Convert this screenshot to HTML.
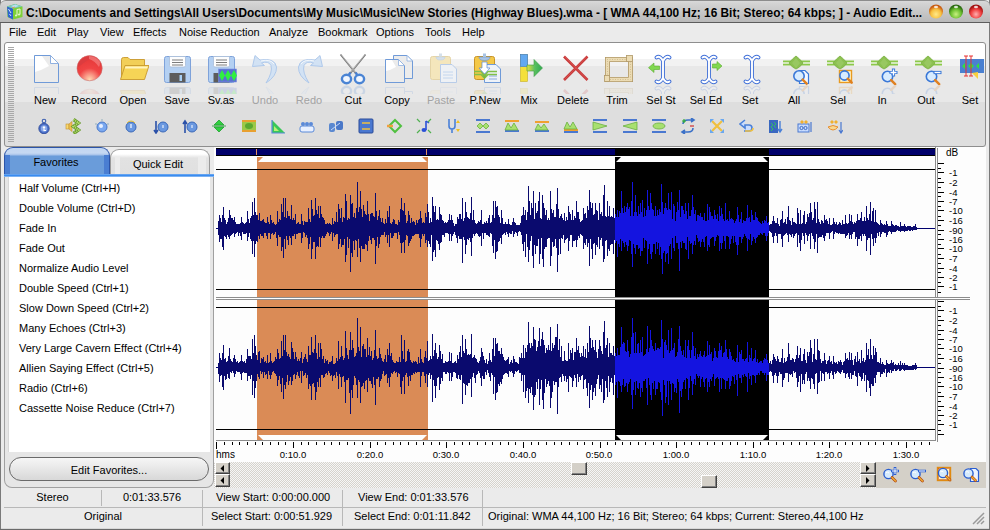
<!DOCTYPE html>
<html><head><meta charset="utf-8">
<style>
*{margin:0;padding:0;box-sizing:border-box}
html,body{width:990px;height:530px;overflow:hidden;background:#ebebeb;font-family:"Liberation Sans",sans-serif;font-size:11px;color:#000}
.a{position:absolute}
.t{position:absolute;white-space:nowrap;line-height:13px}
#title{left:0;top:0;width:990px;height:23px;background:linear-gradient(#d9d9d9 0,#d2d2d2 3px,#c6c6c6 12px,#b9b9b9 21px);border-top:1px solid #8c8c8c;border-bottom:1px solid #5c5c5c;border-radius:6px 6px 0 0}
#ttext{left:26px;top:6px;font-weight:bold;font-size:11.85px;line-height:14px}
.menu{top:26px}
#tb{left:4px;top:42px;width:982px;height:105px;border:1px solid #8e8e8e;border-radius:3px;background:linear-gradient(#fff 0,#fff 16px,#f2f2f2 16px,#f2f2f2 23px,#e8e8e8 23px,#e8e8e8 59px,#dedede 59px)}
.grip{left:8px;width:6px;height:1px;background:#a8a8a8}
.lbl{top:94px;width:60px;text-align:center}
.dis{color:#a3a3a3}
#lp{left:4px;top:147px;width:210px;height:341px}
.fav{left:19px}
#wf{left:214px;top:147px;width:772px;height:315px;background:#fdfdfd}
.stat{top:490px}
</style></head><body>
<div class="a" style="left:0;top:0;width:1px;height:530px;background:#7a7a7a"></div>
<div class="a" style="left:989px;top:0;width:1px;height:530px;background:#7a7a7a"></div>
<div class="a" style="left:0;top:529px;width:990px;height:1px;background:#6a6a6a"></div>
<div class="a" style="left:1px;top:528px;width:988px;height:1px;background:#d8d8d8"></div>

<!-- TITLE -->
<div id="title" class="a"></div>
<svg class="a" style="left:0;top:0" width="26" height="22" viewBox="0 0 26 22">
<path d="M7 6.5L15 4L22.5 6.5V17L13 19.5L7.5 17Z" fill="#7ed038"/>
<path d="M7 6.5L13 8.5V19.5L8 17Z" fill="#2f64d0"/>
<path d="M7 6.5L15 4L22.5 6.5L13 8.5Z" fill="#78c8c0"/>
<path d="M11 6L15.5 4.5L19 6L14 7.5Z" fill="#b8e0f0"/>
<path d="M17 9.5V15.5M17 9.5L20 9V14.5" stroke="#e8f8d0" stroke-width="1" fill="none"/>
<circle cx="16" cy="15.5" r="1" fill="#e8f8d0"/><circle cx="19" cy="14.5" r="1" fill="#e8f8d0"/>
<path d="M8.5 9L11 13M9.5 14L11 16" stroke="#d0e4ff" stroke-width="1"/>
<path d="M12 8L15 7" stroke="#e89040" stroke-width=".8"/>
</svg>
<div id="ttext" class="t">C:\Documents and Settings\All Users\Documents\My Music\Music\New Stories (Highway Blues).wma - [ WMA 44,100 Hz; 16 Bit; Stereo; 64 kbps; ] - Audio Edit...</div>
<svg class="a" style="left:927px;top:3px" width="60" height="17" viewBox="0 0 60 17">
<defs>
<radialGradient id="go" cx="0.5" cy="0.7" r="0.6"><stop offset="0" stop-color="#ffe98a"/><stop offset="0.6" stop-color="#f7c040"/><stop offset="1" stop-color="#c85a10"/></radialGradient>
<radialGradient id="gg" cx="0.5" cy="0.7" r="0.6"><stop offset="0" stop-color="#c8f080"/><stop offset="0.6" stop-color="#6cc030"/><stop offset="1" stop-color="#2a6a10"/></radialGradient>
<radialGradient id="gr" cx="0.5" cy="0.7" r="0.6"><stop offset="0" stop-color="#ffb0b0"/><stop offset="0.6" stop-color="#f04040"/><stop offset="1" stop-color="#a01010"/></radialGradient>
</defs>
<circle cx="9" cy="8.5" r="7" fill="url(#go)"/><ellipse cx="9" cy="4" rx="2" ry="1.2" fill="#fff" opacity=".8"/>
<circle cx="29" cy="8.5" r="7" fill="url(#gg)"/><ellipse cx="29" cy="4" rx="2" ry="1.2" fill="#fff" opacity=".8"/>
<circle cx="49" cy="8.5" r="7" fill="url(#gr)"/><ellipse cx="49" cy="4" rx="2" ry="1.2" fill="#fff" opacity=".8"/>
</svg>

<!-- MENU -->
<div class="t menu" style="left:9px">File</div>
<div class="t menu" style="left:37px">Edit</div>
<div class="t menu" style="left:67px">Play</div>
<div class="t menu" style="left:100px">View</div>
<div class="t menu" style="left:133px">Effects</div>
<div class="t menu" style="left:179px">Noise Reduction</div>
<div class="t menu" style="left:269px">Analyze</div>
<div class="t menu" style="left:318px">Bookmark</div>
<div class="t menu" style="left:376px">Options</div>
<div class="t menu" style="left:425px">Tools</div>
<div class="t menu" style="left:462px">Help</div>

<!-- TOOLBAR -->
<div id="tb" class="a"></div>
<div class="a grip" style="top:47px"></div><div class="a grip" style="top:49px"></div><div class="a grip" style="top:51px"></div><div class="a grip" style="top:53px"></div><div class="a grip" style="top:55px"></div><div class="a grip" style="top:57px"></div><div class="a grip" style="top:59px"></div><div class="a grip" style="top:61px"></div><div class="a grip" style="top:63px"></div><div class="a grip" style="top:65px"></div><div class="a grip" style="top:67px"></div><div class="a grip" style="top:69px"></div><div class="a grip" style="top:71px"></div><div class="a grip" style="top:73px"></div><div class="a grip" style="top:75px"></div><div class="a grip" style="top:77px"></div><div class="a grip" style="top:79px"></div><div class="a grip" style="top:81px"></div><div class="a grip" style="top:83px"></div><div class="a grip" style="top:85px"></div><div class="a grip" style="top:87px"></div><div class="a grip" style="top:89px"></div><div class="a grip" style="top:91px"></div><div class="a grip" style="top:93px"></div><div class="a grip" style="top:95px"></div><div class="a grip" style="top:97px"></div><div class="a grip" style="top:99px"></div><div class="a grip" style="top:101px"></div><div class="a grip" style="top:103px"></div><div class="a grip" style="top:105px"></div><div class="a grip" style="top:107px"></div><div class="a grip" style="top:109px"></div><div class="a grip" style="top:111px"></div><div class="a grip" style="top:113px"></div><div class="a grip" style="top:115px"></div><div class="a grip" style="top:117px"></div><div class="a grip" style="top:119px"></div><div class="a grip" style="top:121px"></div><div class="a grip" style="top:123px"></div><div class="a grip" style="top:125px"></div><div class="a grip" style="top:127px"></div><div class="a grip" style="top:129px"></div><div class="a grip" style="top:131px"></div><div class="a grip" style="top:133px"></div><div class="a grip" style="top:135px"></div><div class="a grip" style="top:137px"></div><div class="a grip" style="top:139px"></div><div class="a grip" style="top:141px"></div>
<svg class="a" style="left:29px;top:53px" width="32" height="32" viewBox="0 0 32 32"><path d="M5.5 2.5H21.5L29.5 10.5V29.5H5.5Z" fill="#ebebeb" stroke="#6f9ad8"/><path d="M6 3H13L20 13L12 17L6 19Z" fill="#fff"/><path d="M21.5 2.5V10.5H29.5Z" fill="#fff" stroke="#8fb0e0"/></svg><svg class="a" style="left:29px;top:85px;opacity:.18" width="32" height="9" viewBox="0 23 32 9"><g transform="translate(0 55) scale(1 -1)"><path d="M5.5 2.5H21.5L29.5 10.5V29.5H5.5Z" fill="#ebebeb" stroke="#6f9ad8"/><path d="M6 3H13L20 13L12 17L6 19Z" fill="#fff"/><path d="M21.5 2.5V10.5H29.5Z" fill="#fff" stroke="#8fb0e0"/></g></svg><div class="t lbl" style="left:15px">New</div><svg class="a" style="left:73px;top:53px" width="32" height="32" viewBox="0 0 32 32"><defs><radialGradient id="rg" cx=".5" cy=".95" r=".75"><stop offset="0" stop-color="#ffd8b0"/><stop offset=".3" stop-color="#f89080"/><stop offset=".6" stop-color="#f04444"/><stop offset="1" stop-color="#e83c3c"/></radialGradient></defs>
<circle cx="16.6" cy="15.2" r="12.6" fill="url(#rg)" stroke="#c87070" stroke-width=".6"/><path d="M5 11Q9 4 16 3Q21 3 24 6Q17 5 12 9Q8 12 5 14Z" fill="#d83c40" opacity=".8"/><path d="M16 3Q23 3 27 9Q27 13 26 14Q22 8 16 6Z" fill="#f48080" opacity=".7"/></svg><svg class="a" style="left:73px;top:85px;opacity:.18" width="32" height="9" viewBox="0 23 32 9"><g transform="translate(0 55) scale(1 -1)"><defs><radialGradient id="rrg" cx=".5" cy=".95" r=".75"><stop offset="0" stop-color="#ffd8b0"/><stop offset=".3" stop-color="#f89080"/><stop offset=".6" stop-color="#f04444"/><stop offset="1" stop-color="#e83c3c"/></radialGradient></defs>
<circle cx="16.6" cy="15.2" r="12.6" fill="url(#rrg)" stroke="#c87070" stroke-width=".6"/><path d="M5 11Q9 4 16 3Q21 3 24 6Q17 5 12 9Q8 12 5 14Z" fill="#d83c40" opacity=".8"/><path d="M16 3Q23 3 27 9Q27 13 26 14Q22 8 16 6Z" fill="#f48080" opacity=".7"/></g></svg><div class="t lbl" style="left:59px">Record</div><svg class="a" style="left:117px;top:53px" width="32" height="32" viewBox="0 0 32 32"><path d="M4.5 6.5Q4.5 4.5 6.5 4.5H11L13 6.5H27.5V24.5H4.5Z" fill="#f2cf58" stroke="#c8982c" stroke-width=".9"/><path d="M3.5 26.5L8 12.5H32L27.5 26.5Z" fill="#f6d456" stroke="#c8982c" stroke-width=".9"/><path d="M8.5 13.5H31L30.3 15.5H7.8Z" fill="#fff4c0"/></svg><svg class="a" style="left:117px;top:85px;opacity:.18" width="32" height="9" viewBox="0 23 32 9"><g transform="translate(0 55) scale(1 -1)"><path d="M4.5 6.5Q4.5 4.5 6.5 4.5H11L13 6.5H27.5V24.5H4.5Z" fill="#f2cf58" stroke="#c8982c" stroke-width=".9"/><path d="M3.5 26.5L8 12.5H32L27.5 26.5Z" fill="#f6d456" stroke="#c8982c" stroke-width=".9"/><path d="M8.5 13.5H31L30.3 15.5H7.8Z" fill="#fff4c0"/></g></svg><div class="t lbl" style="left:103px">Open</div><svg class="a" style="left:161px;top:53px" width="32" height="32" viewBox="0 0 32 32"><rect x="3.5" y="3.5" width="26" height="26" rx="2" fill="#b4d0f2" stroke="#7ea2da"/><path d="M8.5 3.5H24.5V12.5Q24.5 14 23 14H10Q8.5 14 8.5 12.5Z" fill="#fdfdfd" stroke="#a8bcd8" stroke-width=".8"/><path d="M11 7H22M11 9.5H22M11 12H22" stroke="#5a5a5a" stroke-width=".8"/><rect x="8.5" y="20" width="16" height="9.5" fill="#5c5c5c"/><rect x="18.5" y="22" width="2.5" height="6" fill="#a8d0f4"/></svg><svg class="a" style="left:161px;top:85px;opacity:.18" width="32" height="9" viewBox="0 23 32 9"><g transform="translate(0 55) scale(1 -1)"><rect x="3.5" y="3.5" width="26" height="26" rx="2" fill="#b4d0f2" stroke="#7ea2da"/><path d="M8.5 3.5H24.5V12.5Q24.5 14 23 14H10Q8.5 14 8.5 12.5Z" fill="#fdfdfd" stroke="#a8bcd8" stroke-width=".8"/><path d="M11 7H22M11 9.5H22M11 12H22" stroke="#5a5a5a" stroke-width=".8"/><rect x="8.5" y="20" width="16" height="9.5" fill="#5c5c5c"/><rect x="18.5" y="22" width="2.5" height="6" fill="#a8d0f4"/></g></svg><div class="t lbl" style="left:147px">Save</div><svg class="a" style="left:205px;top:53px" width="32" height="32" viewBox="0 0 32 32"><rect x="3.5" y="3.5" width="26" height="26" rx="2" fill="#b4d0f2" stroke="#7ea2da"/><path d="M8.5 3.5H24.5V12.5Q24.5 14 23 14H10Q8.5 14 8.5 12.5Z" fill="#fdfdfd" stroke="#a8bcd8" stroke-width=".8"/><path d="M11 7H22M11 9.5H22M11 12H22" stroke="#5a5a5a" stroke-width=".8"/><rect x="8.5" y="20" width="16" height="9.5" fill="#5c5c5c"/><rect x="18.5" y="22" width="2.5" height="6" fill="#a8d0f4"/><rect x="13.5" y="16" width="18" height="13" fill="#5a70d0" stroke="#7a90e0" stroke-width=".6"/><path d="M14 22.5L17 17L20 22.5L17 28ZM20 22.5L23 17L26 22.5L23 28ZM26 22.5L29 17L32 22.5L29 28Z" fill="#30f040"/></svg><svg class="a" style="left:205px;top:85px;opacity:.18" width="32" height="9" viewBox="0 23 32 9"><g transform="translate(0 55) scale(1 -1)"><rect x="3.5" y="3.5" width="26" height="26" rx="2" fill="#b4d0f2" stroke="#7ea2da"/><path d="M8.5 3.5H24.5V12.5Q24.5 14 23 14H10Q8.5 14 8.5 12.5Z" fill="#fdfdfd" stroke="#a8bcd8" stroke-width=".8"/><path d="M11 7H22M11 9.5H22M11 12H22" stroke="#5a5a5a" stroke-width=".8"/><rect x="8.5" y="20" width="16" height="9.5" fill="#5c5c5c"/><rect x="18.5" y="22" width="2.5" height="6" fill="#a8d0f4"/><rect x="13.5" y="16" width="18" height="13" fill="#5a70d0" stroke="#7a90e0" stroke-width=".6"/><path d="M14 22.5L17 17L20 22.5L17 28ZM20 22.5L23 17L26 22.5L23 28ZM26 22.5L29 17L32 22.5L29 28Z" fill="#30f040"/></g></svg><div class="t lbl" style="left:191px">Sv.as</div><svg class="a" style="left:249px;top:53px" width="32" height="32" viewBox="0 0 32 32"><path d="M6 2.5L3.5 13.5L15.5 12.5L12.5 10Q19.5 7.5 22 12.5Q24 19 17 30Q28 23 27.5 14Q26 4.5 11 7Z" fill="#d2e2f4" stroke="#a9c5ea" stroke-width=".9"/><path d="M12 8Q21 5.5 25 11" stroke="#f4f8fc" stroke-width="1" fill="none"/></svg><svg class="a" style="left:249px;top:85px;opacity:.18" width="32" height="9" viewBox="0 23 32 9"><g transform="translate(0 55) scale(1 -1)"><path d="M6 2.5L3.5 13.5L15.5 12.5L12.5 10Q19.5 7.5 22 12.5Q24 19 17 30Q28 23 27.5 14Q26 4.5 11 7Z" fill="#d2e2f4" stroke="#a9c5ea" stroke-width=".9"/><path d="M12 8Q21 5.5 25 11" stroke="#f4f8fc" stroke-width="1" fill="none"/></g></svg><div class="t lbl dis" style="left:235px">Undo</div><svg class="a" style="left:293px;top:53px" width="32" height="32" viewBox="0 0 32 32"><g transform="translate(33 0) scale(-1 1)"><path d="M6 2.5L3.5 13.5L15.5 12.5L12.5 10Q19.5 7.5 22 12.5Q24 19 17 30Q28 23 27.5 14Q26 4.5 11 7Z" fill="#d2e2f4" stroke="#a9c5ea" stroke-width=".9"/><path d="M12 8Q21 5.5 25 11" stroke="#f4f8fc" stroke-width="1" fill="none"/></g></svg><svg class="a" style="left:293px;top:85px;opacity:.18" width="32" height="9" viewBox="0 23 32 9"><g transform="translate(0 55) scale(1 -1)"><g transform="translate(33 0) scale(-1 1)"><path d="M6 2.5L3.5 13.5L15.5 12.5L12.5 10Q19.5 7.5 22 12.5Q24 19 17 30Q28 23 27.5 14Q26 4.5 11 7Z" fill="#d2e2f4" stroke="#a9c5ea" stroke-width=".9"/><path d="M12 8Q21 5.5 25 11" stroke="#f4f8fc" stroke-width="1" fill="none"/></g></g></svg><div class="t lbl dis" style="left:279px">Redo</div><svg class="a" style="left:337px;top:53px" width="32" height="32" viewBox="0 0 32 32"><path d="M3.5 1.5L18.5 20M28.5 1.5L13.5 20" stroke="#7a7a7a" stroke-width="1.6"/><path d="M4.5 2L18 19M27.5 2L14 19" stroke="#e0e0e0" stroke-width=".5"/><path d="M13.5 19.5L11 23M18.5 19.5L21 23" stroke="#4a80d0" stroke-width="2.4"/><ellipse cx="9.5" cy="26" rx="4.6" ry="4.2" fill="#f0f6ff" stroke="#4a84d4" stroke-width="2.4"/><ellipse cx="22.5" cy="26" rx="4.6" ry="4.2" fill="#f0f6ff" stroke="#4a84d4" stroke-width="2.4"/></svg><svg class="a" style="left:337px;top:85px;opacity:.18" width="32" height="9" viewBox="0 23 32 9"><g transform="translate(0 55) scale(1 -1)"><path d="M3.5 1.5L18.5 20M28.5 1.5L13.5 20" stroke="#7a7a7a" stroke-width="1.6"/><path d="M4.5 2L18 19M27.5 2L14 19" stroke="#e0e0e0" stroke-width=".5"/><path d="M13.5 19.5L11 23M18.5 19.5L21 23" stroke="#4a80d0" stroke-width="2.4"/><ellipse cx="9.5" cy="26" rx="4.6" ry="4.2" fill="#f0f6ff" stroke="#4a84d4" stroke-width="2.4"/><ellipse cx="22.5" cy="26" rx="4.6" ry="4.2" fill="#f0f6ff" stroke="#4a84d4" stroke-width="2.4"/></g></svg><div class="t lbl" style="left:323px">Cut</div><svg class="a" style="left:381px;top:53px" width="32" height="32" viewBox="0 0 32 32"><path d="M12.5 2.5H26L31.5 8V25.5H12.5Z" fill="#ececec" stroke="#6f9ad8"/><path d="M26 2.5V8H31.5Z" fill="#fff" stroke="#8fb0e0" stroke-width=".8"/><path d="M4.5 6.5H17.5L23.5 12.5V29.5H4.5Z" fill="#ebebeb" stroke="#6f9ad8"/><path d="M5 7H11L15 14L9 17L5 18Z" fill="#fff"/><path d="M17.5 6.5V12.5H23.5Z" fill="#fff" stroke="#8fb0e0" stroke-width=".8"/></svg><svg class="a" style="left:381px;top:85px;opacity:.18" width="32" height="9" viewBox="0 23 32 9"><g transform="translate(0 55) scale(1 -1)"><path d="M12.5 2.5H26L31.5 8V25.5H12.5Z" fill="#ececec" stroke="#6f9ad8"/><path d="M26 2.5V8H31.5Z" fill="#fff" stroke="#8fb0e0" stroke-width=".8"/><path d="M4.5 6.5H17.5L23.5 12.5V29.5H4.5Z" fill="#ebebeb" stroke="#6f9ad8"/><path d="M5 7H11L15 14L9 17L5 18Z" fill="#fff"/><path d="M17.5 6.5V12.5H23.5Z" fill="#fff" stroke="#8fb0e0" stroke-width=".8"/></g></svg><div class="t lbl" style="left:367px">Copy</div><svg class="a" style="left:425px;top:53px" width="32" height="32" viewBox="0 0 32 32"><rect x="5.5" y="3.5" width="20" height="23" rx="2" fill="#f4e6bc" stroke="#e4d4a8"/><path d="M11 4H20Q20 7 15.5 7Q11 7 11 4Z" fill="#d4e0ec" stroke="#c0d0e4" stroke-width=".6"/><rect x="14" y="0.5" width="3" height="3" fill="#d4e0ec"/><path d="M15.5 11.5H27L31.5 16V29.5H15.5Z" fill="#eef1f5" stroke="#b8cce8"/><path d="M18 19H28M18 22H28M18 25H28" stroke="#b8d0ec" stroke-width=".8"/></svg><svg class="a" style="left:425px;top:85px;opacity:.18" width="32" height="9" viewBox="0 23 32 9"><g transform="translate(0 55) scale(1 -1)"><rect x="5.5" y="3.5" width="20" height="23" rx="2" fill="#f4e6bc" stroke="#e4d4a8"/><path d="M11 4H20Q20 7 15.5 7Q11 7 11 4Z" fill="#d4e0ec" stroke="#c0d0e4" stroke-width=".6"/><rect x="14" y="0.5" width="3" height="3" fill="#d4e0ec"/><path d="M15.5 11.5H27L31.5 16V29.5H15.5Z" fill="#eef1f5" stroke="#b8cce8"/><path d="M18 19H28M18 22H28M18 25H28" stroke="#b8d0ec" stroke-width=".8"/></g></svg><div class="t lbl dis" style="left:411px">Paste</div><svg class="a" style="left:469px;top:53px" width="32" height="32" viewBox="0 0 32 32"><rect x="5.5" y="3.5" width="20" height="23" rx="2" fill="#f4c848" stroke="#c89428"/><path d="M10 4H21Q21 7.5 15.5 7.5Q10 7.5 10 4Z" fill="#a8c4e4" stroke="#6a90c8" stroke-width=".6"/><rect x="14" y="0.5" width="3" height="3.5" fill="#a8c4e4"/><path d="M15.5 11.5H27L31.5 16V29.5H15.5Z" fill="#eef2f8" stroke="#6f9ad8"/><path d="M20 23H28M20 26H28" stroke="#6f9ad8" stroke-width=".8"/><path d="M5 18.5H12L15.5 22L19 18.5H28M5 21.5H12L15.5 25L19 21.5H28" stroke="#80c048" stroke-width="1.6" fill="none"/><path d="M12 19L15.5 23L19 19L15.5 26Z" fill="#78b840"/><path d="M13 9H18V15H21L15.5 21L10 15H13Z" fill="#fff" stroke="#5a8ad8" stroke-width=".7"/></svg><svg class="a" style="left:469px;top:85px;opacity:.18" width="32" height="9" viewBox="0 23 32 9"><g transform="translate(0 55) scale(1 -1)"><rect x="5.5" y="3.5" width="20" height="23" rx="2" fill="#f4c848" stroke="#c89428"/><path d="M10 4H21Q21 7.5 15.5 7.5Q10 7.5 10 4Z" fill="#a8c4e4" stroke="#6a90c8" stroke-width=".6"/><rect x="14" y="0.5" width="3" height="3.5" fill="#a8c4e4"/><path d="M15.5 11.5H27L31.5 16V29.5H15.5Z" fill="#eef2f8" stroke="#6f9ad8"/><path d="M20 23H28M20 26H28" stroke="#6f9ad8" stroke-width=".8"/><path d="M5 18.5H12L15.5 22L19 18.5H28M5 21.5H12L15.5 25L19 21.5H28" stroke="#80c048" stroke-width="1.6" fill="none"/><path d="M12 19L15.5 23L19 19L15.5 26Z" fill="#78b840"/><path d="M13 9H18V15H21L15.5 21L10 15H13Z" fill="#fff" stroke="#5a8ad8" stroke-width=".7"/></g></svg><div class="t lbl" style="left:455px">P.New</div><svg class="a" style="left:513px;top:53px" width="32" height="32" viewBox="0 0 32 32"><defs><linearGradient id="mxa" x1="0" y1="0" x2="1" y2="0"><stop offset="0" stop-color="#e8e040"/><stop offset=".5" stop-color="#58c060"/><stop offset="1" stop-color="#30a850"/></linearGradient></defs><rect x="7.5" y="1.5" width="7" height="27" fill="#f4e03a" stroke="#c8b020" stroke-width=".6"/><rect x="7.5" y="1.5" width="7" height="12" fill="#62a8f0" stroke="#3a7ad0" stroke-width=".6"/><path d="M14 12H21V6.5L29.5 15L21 23.5V18H14Z" fill="url(#mxa)" stroke="#3a9a48" stroke-width=".6"/></svg><svg class="a" style="left:513px;top:85px;opacity:.18" width="32" height="9" viewBox="0 23 32 9"><g transform="translate(0 55) scale(1 -1)"><defs><linearGradient id="rmxa" x1="0" y1="0" x2="1" y2="0"><stop offset="0" stop-color="#e8e040"/><stop offset=".5" stop-color="#58c060"/><stop offset="1" stop-color="#30a850"/></linearGradient></defs><rect x="7.5" y="1.5" width="7" height="27" fill="#f4e03a" stroke="#c8b020" stroke-width=".6"/><rect x="7.5" y="1.5" width="7" height="12" fill="#62a8f0" stroke="#3a7ad0" stroke-width=".6"/><path d="M14 12H21V6.5L29.5 15L21 23.5V18H14Z" fill="url(#rmxa)" stroke="#3a9a48" stroke-width=".6"/></g></svg><div class="t lbl" style="left:499px">Mix</div><svg class="a" style="left:557px;top:53px" width="32" height="32" viewBox="0 0 32 32"><path d="M7 3.5L30.5 27M30.5 3.5L7 27" stroke="#c83a3a" stroke-width="2.6"/><path d="M7.5 3.5L30 26.5M30 3.5L7.5 26.5" stroke="#e86a6a" stroke-width=".7" opacity=".7"/></svg><svg class="a" style="left:557px;top:85px;opacity:.18" width="32" height="9" viewBox="0 23 32 9"><g transform="translate(0 55) scale(1 -1)"><path d="M7 3.5L30.5 27M30.5 3.5L7 27" stroke="#c83a3a" stroke-width="2.6"/><path d="M7.5 3.5L30 26.5M30 3.5L7.5 26.5" stroke="#e86a6a" stroke-width=".7" opacity=".7"/></g></svg><div class="t lbl" style="left:543px">Delete</div><svg class="a" style="left:601px;top:53px" width="32" height="32" viewBox="0 0 32 32"><path d="M6.5 6.5H29.5V26.5H6.5Z" fill="none" stroke="#b09868" stroke-width="5"/><path d="M6.5 6.5H29.5V26.5H6.5Z" fill="none" stroke="#ecdcb4" stroke-width="3.4"/><path d="M6 6.5H29.5M29.5 6V26.5" stroke="#c0a878" stroke-width=".6" stroke-dasharray="1 1.5"/><path d="M6.5 26.5V7M6.5 26.5H29" stroke="#c0a878" stroke-width=".6" stroke-dasharray="1 1.5"/><rect x="25.5" y="2.5" width="6" height="6" fill="#ecdcb4" stroke="#b09868" stroke-width=".8"/><rect x="3.5" y="22.5" width="5" height="6" fill="#ecdcb4" stroke="#b09868" stroke-width=".8"/></svg><svg class="a" style="left:601px;top:85px;opacity:.18" width="32" height="9" viewBox="0 23 32 9"><g transform="translate(0 55) scale(1 -1)"><path d="M6.5 6.5H29.5V26.5H6.5Z" fill="none" stroke="#b09868" stroke-width="5"/><path d="M6.5 6.5H29.5V26.5H6.5Z" fill="none" stroke="#ecdcb4" stroke-width="3.4"/><path d="M6 6.5H29.5M29.5 6V26.5" stroke="#c0a878" stroke-width=".6" stroke-dasharray="1 1.5"/><path d="M6.5 26.5V7M6.5 26.5H29" stroke="#c0a878" stroke-width=".6" stroke-dasharray="1 1.5"/><rect x="25.5" y="2.5" width="6" height="6" fill="#ecdcb4" stroke="#b09868" stroke-width=".8"/><rect x="3.5" y="22.5" width="5" height="6" fill="#ecdcb4" stroke="#b09868" stroke-width=".8"/></g></svg><div class="t lbl" style="left:587px">Trim</div><svg class="a" style="left:645px;top:53px" width="32" height="32" viewBox="0 0 32 32"><g fill="none" stroke-linecap="round" stroke-linejoin="round"><path d="M11.5 4.5C14 2.5 16.5 5 18 8C19.5 5 22 2.5 24.5 4.5M18 8V25M11.5 28.5C14 30.5 16.5 28 18 25C19.5 28 22 30.5 24.5 28.5" stroke="#3f6fd8" stroke-width="3.8"/><path d="M11.5 4.5C14 2.5 16.5 5 18 8C19.5 5 22 2.5 24.5 4.5M18 8V25M11.5 28.5C14 30.5 16.5 28 18 25C19.5 28 22 30.5 24.5 28.5" stroke="#fff" stroke-width="1.9"/></g><path d="M9 10V13H14.5V16.5H9V19.5L3.5 14.7Z" fill="#80d850" stroke="#5aa830" stroke-width=".6"/></svg><svg class="a" style="left:645px;top:85px;opacity:.18" width="32" height="9" viewBox="0 23 32 9"><g transform="translate(0 55) scale(1 -1)"><g fill="none" stroke-linecap="round" stroke-linejoin="round"><path d="M11.5 4.5C14 2.5 16.5 5 18 8C19.5 5 22 2.5 24.5 4.5M18 8V25M11.5 28.5C14 30.5 16.5 28 18 25C19.5 28 22 30.5 24.5 28.5" stroke="#3f6fd8" stroke-width="3.8"/><path d="M11.5 4.5C14 2.5 16.5 5 18 8C19.5 5 22 2.5 24.5 4.5M18 8V25M11.5 28.5C14 30.5 16.5 28 18 25C19.5 28 22 30.5 24.5 28.5" stroke="#fff" stroke-width="1.9"/></g><path d="M9 10V13H14.5V16.5H9V19.5L3.5 14.7Z" fill="#80d850" stroke="#5aa830" stroke-width=".6"/></g></svg><div class="t lbl" style="left:631px">Sel St</div><svg class="a" style="left:690px;top:53px" width="32" height="32" viewBox="0 0 32 32"><g transform="translate(1 0)"><g fill="none" stroke-linecap="round" stroke-linejoin="round"><path d="M11.5 4.5C14 2.5 16.5 5 18 8C19.5 5 22 2.5 24.5 4.5M18 8V25M11.5 28.5C14 30.5 16.5 28 18 25C19.5 28 22 30.5 24.5 28.5" stroke="#3f6fd8" stroke-width="3.8"/><path d="M11.5 4.5C14 2.5 16.5 5 18 8C19.5 5 22 2.5 24.5 4.5M18 8V25M11.5 28.5C14 30.5 16.5 28 18 25C19.5 28 22 30.5 24.5 28.5" stroke="#fff" stroke-width="1.9"/></g></g><path d="M27 8.5V11H22.5V15H27V17.5L32 13Z" fill="#80d850" stroke="#5aa830" stroke-width=".6"/></svg><svg class="a" style="left:690px;top:85px;opacity:.18" width="32" height="9" viewBox="0 23 32 9"><g transform="translate(0 55) scale(1 -1)"><g transform="translate(1 0)"><g fill="none" stroke-linecap="round" stroke-linejoin="round"><path d="M11.5 4.5C14 2.5 16.5 5 18 8C19.5 5 22 2.5 24.5 4.5M18 8V25M11.5 28.5C14 30.5 16.5 28 18 25C19.5 28 22 30.5 24.5 28.5" stroke="#3f6fd8" stroke-width="3.8"/><path d="M11.5 4.5C14 2.5 16.5 5 18 8C19.5 5 22 2.5 24.5 4.5M18 8V25M11.5 28.5C14 30.5 16.5 28 18 25C19.5 28 22 30.5 24.5 28.5" stroke="#fff" stroke-width="1.9"/></g></g><path d="M27 8.5V11H22.5V15H27V17.5L32 13Z" fill="#80d850" stroke="#5aa830" stroke-width=".6"/></g></svg><div class="t lbl" style="left:676px">Sel Ed</div><svg class="a" style="left:734px;top:53px" width="32" height="32" viewBox="0 0 32 32"><g fill="none" stroke-linecap="round" stroke-linejoin="round"><path d="M11.5 4.5C14 2.5 16.5 5 18 8C19.5 5 22 2.5 24.5 4.5M18 8V25M11.5 28.5C14 30.5 16.5 28 18 25C19.5 28 22 30.5 24.5 28.5" stroke="#3f6fd8" stroke-width="3.8"/><path d="M11.5 4.5C14 2.5 16.5 5 18 8C19.5 5 22 2.5 24.5 4.5M18 8V25M11.5 28.5C14 30.5 16.5 28 18 25C19.5 28 22 30.5 24.5 28.5" stroke="#fff" stroke-width="1.9"/></g></svg><svg class="a" style="left:734px;top:85px;opacity:.18" width="32" height="9" viewBox="0 23 32 9"><g transform="translate(0 55) scale(1 -1)"><g fill="none" stroke-linecap="round" stroke-linejoin="round"><path d="M11.5 4.5C14 2.5 16.5 5 18 8C19.5 5 22 2.5 24.5 4.5M18 8V25M11.5 28.5C14 30.5 16.5 28 18 25C19.5 28 22 30.5 24.5 28.5" stroke="#3f6fd8" stroke-width="3.8"/><path d="M11.5 4.5C14 2.5 16.5 5 18 8C19.5 5 22 2.5 24.5 4.5M18 8V25M11.5 28.5C14 30.5 16.5 28 18 25C19.5 28 22 30.5 24.5 28.5" stroke="#fff" stroke-width="1.9"/></g></g></svg><div class="t lbl" style="left:720px">Set</div><svg class="a" style="left:778px;top:53px" width="32" height="32" viewBox="0 0 32 32"><path d="M5 8.5H32M5 11.5H32" stroke="#8cc84a" stroke-width="2"/><path d="M5 10H32" stroke="#e8f4d8" stroke-width="1"/><path d="M11 10L14.5 6L18 3L21.5 6L25 10L21.5 14L18 16L14.5 14Z" fill="#8cc050" stroke="#78b040" stroke-width=".8"/><path d="M14 10L18 5L22 10L18 15Z" fill="#98c860"/><path d="M21.5 17.5H27L30.5 21V30.5H21.5Z" fill="#f4f8ff" stroke="#3a78d8" stroke-width="1.2"/><circle cx="21" cy="23" r="5.2" fill="#d8ecff" stroke="#3a78d8" stroke-width="1.6"/><path d="M24.64 26.64L28.64 30.64" stroke="#e08020" stroke-width="2.4" stroke-linecap="round"/></svg><svg class="a" style="left:778px;top:85px;opacity:.18" width="32" height="9" viewBox="0 23 32 9"><g transform="translate(0 55) scale(1 -1)"><path d="M5 8.5H32M5 11.5H32" stroke="#8cc84a" stroke-width="2"/><path d="M5 10H32" stroke="#e8f4d8" stroke-width="1"/><path d="M11 10L14.5 6L18 3L21.5 6L25 10L21.5 14L18 16L14.5 14Z" fill="#8cc050" stroke="#78b040" stroke-width=".8"/><path d="M14 10L18 5L22 10L18 15Z" fill="#98c860"/><path d="M21.5 17.5H27L30.5 21V30.5H21.5Z" fill="#f4f8ff" stroke="#3a78d8" stroke-width="1.2"/><circle cx="21" cy="23" r="5.2" fill="#d8ecff" stroke="#3a78d8" stroke-width="1.6"/><path d="M24.64 26.64L28.64 30.64" stroke="#e08020" stroke-width="2.4" stroke-linecap="round"/></g></svg><div class="t lbl" style="left:764px">All</div><svg class="a" style="left:822px;top:53px" width="32" height="32" viewBox="0 0 32 32"><path d="M5 8.5H32M5 11.5H32" stroke="#8cc84a" stroke-width="2"/><path d="M5 10H32" stroke="#e8f4d8" stroke-width="1"/><path d="M11 10L14.5 6L18 3L21.5 6L25 10L21.5 14L18 16L14.5 14Z" fill="#8cc050" stroke="#78b040" stroke-width=".8"/><path d="M14 10L18 5L22 10L18 15Z" fill="#98c860"/><rect x="17.5" y="17.5" width="12" height="12" fill="#fff8d0" stroke="#e89a20" stroke-width="1.4"/><circle cx="22.5" cy="22.5" r="4.6" fill="#d8ecff" stroke="#3a78d8" stroke-width="1.6"/><path d="M25.72 25.72L29.72 29.72" stroke="#e08020" stroke-width="2.4" stroke-linecap="round"/></svg><svg class="a" style="left:822px;top:85px;opacity:.18" width="32" height="9" viewBox="0 23 32 9"><g transform="translate(0 55) scale(1 -1)"><path d="M5 8.5H32M5 11.5H32" stroke="#8cc84a" stroke-width="2"/><path d="M5 10H32" stroke="#e8f4d8" stroke-width="1"/><path d="M11 10L14.5 6L18 3L21.5 6L25 10L21.5 14L18 16L14.5 14Z" fill="#8cc050" stroke="#78b040" stroke-width=".8"/><path d="M14 10L18 5L22 10L18 15Z" fill="#98c860"/><rect x="17.5" y="17.5" width="12" height="12" fill="#fff8d0" stroke="#e89a20" stroke-width="1.4"/><circle cx="22.5" cy="22.5" r="4.6" fill="#d8ecff" stroke="#3a78d8" stroke-width="1.6"/><path d="M25.72 25.72L29.72 29.72" stroke="#e08020" stroke-width="2.4" stroke-linecap="round"/></g></svg><div class="t lbl" style="left:808px">Sel</div><svg class="a" style="left:866px;top:53px" width="32" height="32" viewBox="0 0 32 32"><path d="M5 8.5H32M5 11.5H32" stroke="#8cc84a" stroke-width="2"/><path d="M5 10H32" stroke="#e8f4d8" stroke-width="1"/><path d="M11 10L14.5 6L18 3L21.5 6L25 10L21.5 14L18 16L14.5 14Z" fill="#8cc050" stroke="#78b040" stroke-width=".8"/><path d="M14 10L18 5L22 10L18 15Z" fill="#98c860"/><circle cx="21.5" cy="23.5" r="5.2" fill="#d8ecff" stroke="#3a78d8" stroke-width="1.6"/><path d="M25.14 27.14L29.14 31.14" stroke="#e08020" stroke-width="2.4" stroke-linecap="round"/><path d="M27.5 15.5V23.5M23.5 19.5H31.5" stroke="#3a78d8" stroke-width="3.2"/><path d="M27.5 16.5V22.5M24.5 19.5H30.5" stroke="#fff" stroke-width="1.3"/></svg><svg class="a" style="left:866px;top:85px;opacity:.18" width="32" height="9" viewBox="0 23 32 9"><g transform="translate(0 55) scale(1 -1)"><path d="M5 8.5H32M5 11.5H32" stroke="#8cc84a" stroke-width="2"/><path d="M5 10H32" stroke="#e8f4d8" stroke-width="1"/><path d="M11 10L14.5 6L18 3L21.5 6L25 10L21.5 14L18 16L14.5 14Z" fill="#8cc050" stroke="#78b040" stroke-width=".8"/><path d="M14 10L18 5L22 10L18 15Z" fill="#98c860"/><circle cx="21.5" cy="23.5" r="5.2" fill="#d8ecff" stroke="#3a78d8" stroke-width="1.6"/><path d="M25.14 27.14L29.14 31.14" stroke="#e08020" stroke-width="2.4" stroke-linecap="round"/><path d="M27.5 15.5V23.5M23.5 19.5H31.5" stroke="#3a78d8" stroke-width="3.2"/><path d="M27.5 16.5V22.5M24.5 19.5H30.5" stroke="#fff" stroke-width="1.3"/></g></svg><div class="t lbl" style="left:852px">In</div><svg class="a" style="left:910px;top:53px" width="32" height="32" viewBox="0 0 32 32"><path d="M5 8.5H32M5 11.5H32" stroke="#8cc84a" stroke-width="2"/><path d="M5 10H32" stroke="#e8f4d8" stroke-width="1"/><path d="M11 10L14.5 6L18 3L21.5 6L25 10L21.5 14L18 16L14.5 14Z" fill="#8cc050" stroke="#78b040" stroke-width=".8"/><path d="M14 10L18 5L22 10L18 15Z" fill="#98c860"/><circle cx="21.5" cy="23.5" r="5.2" fill="#d8ecff" stroke="#3a78d8" stroke-width="1.6"/><path d="M25.14 27.14L29.14 31.14" stroke="#e08020" stroke-width="2.4" stroke-linecap="round"/><path d="M23.5 19.5H31.5" stroke="#3a78d8" stroke-width="3.2"/><path d="M24.5 19.5H30.5" stroke="#fff" stroke-width="1.3"/></svg><svg class="a" style="left:910px;top:85px;opacity:.18" width="32" height="9" viewBox="0 23 32 9"><g transform="translate(0 55) scale(1 -1)"><path d="M5 8.5H32M5 11.5H32" stroke="#8cc84a" stroke-width="2"/><path d="M5 10H32" stroke="#e8f4d8" stroke-width="1"/><path d="M11 10L14.5 6L18 3L21.5 6L25 10L21.5 14L18 16L14.5 14Z" fill="#8cc050" stroke="#78b040" stroke-width=".8"/><path d="M14 10L18 5L22 10L18 15Z" fill="#98c860"/><circle cx="21.5" cy="23.5" r="5.2" fill="#d8ecff" stroke="#3a78d8" stroke-width="1.6"/><path d="M25.14 27.14L29.14 31.14" stroke="#e08020" stroke-width="2.4" stroke-linecap="round"/><path d="M23.5 19.5H31.5" stroke="#3a78d8" stroke-width="3.2"/><path d="M24.5 19.5H30.5" stroke="#fff" stroke-width="1.3"/></g></svg><div class="t lbl" style="left:896px">Out</div><svg class="a" style="left:954px;top:53px" width="32" height="32" viewBox="0 0 32 32"><rect x="6" y="6" width="24" height="14" fill="#4a80d0"/><path d="M8 13L11 10V16ZM14 13L17 10L20 13L17 16ZM22 13L25 10V16Z" fill="#30e040"/><path d="M12 3V23M17 3V23M10 3H14M10 23H14M15 3H19M15 23H19" stroke="#e83030" stroke-width="1"/><path d="M18 20L24 26V19Z" fill="#f8d040"/></svg><svg class="a" style="left:954px;top:85px;opacity:.18" width="32" height="9" viewBox="0 23 32 9"><g transform="translate(0 55) scale(1 -1)"><rect x="6" y="6" width="24" height="14" fill="#4a80d0"/><path d="M8 13L11 10V16ZM14 13L17 10L20 13L17 16ZM22 13L25 10V16Z" fill="#30e040"/><path d="M12 3V23M17 3V23M10 3H14M10 23H14M15 3H19M15 23H19" stroke="#e83030" stroke-width="1"/><path d="M18 20L24 26V19Z" fill="#f8d040"/></g></svg><div class="t lbl" style="left:940px">Set</div>
<svg class="a" style="left:36px;top:118px" width="16" height="16" viewBox="0 0 16 16"><circle cx="8" cy="10.5" r="5.2" fill="#4a70c8" stroke="#2a4494" stroke-width=".8"/><circle cx="8" cy="10.5" r="3.2" fill="#8aa8e8"/><path d="M8 8V12.5H10M6.8 9.5H9.2" stroke="#fff" stroke-width="1.1" fill="none"/><circle cx="8" cy="3" r="1.8" fill="none" stroke="#3a5eb0" stroke-width="1.1"/><path d="M8 4.8V5.5" stroke="#3a5eb0"/></svg><svg class="a" style="left:65px;top:118px" width="16" height="16" viewBox="0 0 16 16"><rect x="1" y="6" width="3" height="5" fill="#f8d870" stroke="#c09030" stroke-width=".6"/><path d="M4 6L7 3.5V13.5L4 11Z" fill="#f0c050" stroke="#c09030" stroke-width=".6"/><path d="M8.5 1.5L13.5 5L8.5 8.5L13.5 12L8.5 15.5" stroke="#6a9a30" stroke-width="3.4" fill="none"/><path d="M8.5 1.5L13.5 5L8.5 8.5L13.5 12L8.5 15.5" stroke="#b8e070" stroke-width="2" fill="none" stroke-dasharray="1 1"/></svg><svg class="a" style="left:94px;top:118px" width="16" height="16" viewBox="0 0 16 16"><circle cx="8" cy="9" r="5" fill="#7aa8f0" stroke="#4a78c8"/><circle cx="7" cy="8" r="2" fill="#e8f0ff"/><circle cx="2" cy="6" r=".8" fill="#8ab"/><circle cx="14" cy="6" r=".8" fill="#8ab"/><circle cx="8" cy="2" r=".8" fill="#8ab"/></svg><svg class="a" style="left:123px;top:118px" width="16" height="16" viewBox="0 0 16 16"><circle cx="8" cy="9" r="5" fill="#6a98e0" stroke="#3a68b8"/><path d="M8 6V10" stroke="#fff" stroke-width="1.2"/><path d="M4 5A5 5 0 0 1 12 5" stroke="#e8c030" fill="none"/></svg><svg class="a" style="left:153px;top:118px" width="16" height="16" viewBox="0 0 16 16"><circle cx="10" cy="9" r="5" fill="#6a98e0" stroke="#3a68b8"/><path d="M10 7V10" stroke="#fff"/><path d="M3 3V14M1 12L3 15L5 12" stroke="#2a50a8" stroke-width="1.6" fill="none"/></svg><svg class="a" style="left:182px;top:118px" width="16" height="16" viewBox="0 0 16 16"><circle cx="10" cy="9" r="5" fill="#6a98e0" stroke="#3a68b8"/><path d="M10 7V10" stroke="#fff"/><path d="M3 15V4M1 6L3 3L5 6" stroke="#2a50a8" stroke-width="1.6" fill="none"/></svg><svg class="a" style="left:211px;top:118px" width="16" height="16" viewBox="0 0 16 16"><path d="M8 2L3 7H13ZM8 14L3 9H13ZM1 8H15" fill="#30d040" stroke="#20a030" stroke-width=".8"/></svg><svg class="a" style="left:241px;top:118px" width="16" height="16" viewBox="0 0 16 16"><rect x="1" y="2" width="14" height="12" fill="#9cc848"/><path d="M1 3H15M1 13H15" stroke="#e8a030" stroke-width="2"/><ellipse cx="8" cy="8" rx="4" ry="3" fill="#5aa830"/></svg><svg class="a" style="left:270px;top:118px" width="16" height="16" viewBox="0 0 16 16"><path d="M2 2V15H15Z" fill="#38c858"/><path d="M2 2V15H15" fill="none" stroke="#5a8ad8" stroke-width="1.2"/><path d="M4 8V13H9Z" fill="#b8f078"/></svg><svg class="a" style="left:299px;top:118px" width="16" height="16" viewBox="0 0 16 16"><circle cx="4" cy="6" r="2" fill="#5a8ad8"/><circle cx="8" cy="6" r="2" fill="#5a8ad8"/><circle cx="12" cy="6" r="2" fill="#5a8ad8"/><rect x="1" y="8" width="14" height="6" rx="2" fill="#e8f0ff" stroke="#5a8ad8"/></svg><svg class="a" style="left:328px;top:118px" width="16" height="16" viewBox="0 0 16 16"><rect x="1" y="5" width="6" height="9" rx="2" fill="#5a88d0"/><rect x="8" y="3" width="7" height="9" rx="2" fill="#4a78c8"/><path d="M3 12L12 5" stroke="#c8dcff"/></svg><svg class="a" style="left:358px;top:118px" width="16" height="16" viewBox="0 0 16 16"><rect x="1" y="1" width="14" height="14" rx="1" fill="#4a78d0" stroke="#2a4a98"/><path d="M4 5H12M4 11H12" stroke="#f0c040" stroke-width="1.5"/></svg><svg class="a" style="left:387px;top:118px" width="16" height="16" viewBox="0 0 16 16"><path d="M8 2L14 8L8 14L2 8Z" fill="none" stroke="#50c040" stroke-width="2"/><path d="M0 8H6" stroke="#f0a040" stroke-width="2.5"/></svg><svg class="a" style="left:416px;top:118px" width="16" height="16" viewBox="0 0 16 16"><path d="M10 3V12" stroke="#2a50d8" stroke-width="1.6"/><ellipse cx="8" cy="12" rx="2.5" ry="2" fill="#2a50d8"/><path d="M10 3L13 5" stroke="#2a50d8" stroke-width="1.5"/><path d="M1 1L4 4M15 1L12 4M1 15L4 12M15 15L12 12" stroke="#50b050" stroke-width="1.2"/></svg><svg class="a" style="left:446px;top:118px" width="16" height="16" viewBox="0 0 16 16"><path d="M3 1V8Q3 11 6 11Q9 11 9 8V1M6 11V15" stroke="#4a80d8" stroke-width="1.6" fill="none"/><path d="M12 2L10 5H14ZM12 14L10 11H14Z" fill="#f0c020"/></svg><svg class="a" style="left:475px;top:118px" width="16" height="16" viewBox="0 0 16 16"><path d="M1 2H15M1 14H15" stroke="#4a78d0" stroke-width="2"/><path d="M2 8L5 5L8 8L11 5L14 8L11 11L8 8L5 11Z" fill="#a8e070" stroke="#6ab040" stroke-width=".8"/></svg><svg class="a" style="left:504px;top:118px" width="16" height="16" viewBox="0 0 16 16"><path d="M1 3H15" stroke="#f0a030" stroke-width="2"/><path d="M1 13H15" stroke="#4a78d0" stroke-width="2"/><path d="M1 12L4 5L7 10L10 5L14 12Z" fill="#a8e070" stroke="#6ab040" stroke-width=".8"/></svg><svg class="a" style="left:534px;top:118px" width="16" height="16" viewBox="0 0 16 16"><path d="M1 4H15" stroke="#f0a030" stroke-width="2"/><path d="M1 13H15" stroke="#4a78d0" stroke-width="2"/><path d="M1 12L4 6L7 10L10 6L14 12Z" fill="#a8e070" stroke="#6ab040" stroke-width=".8"/></svg><svg class="a" style="left:563px;top:118px" width="16" height="16" viewBox="0 0 16 16"><path d="M1 12H15" stroke="#f0a030" stroke-width="2"/><path d="M1 14H15" stroke="#4a78d0" stroke-width="2"/><path d="M1 11L4 4L7 9L10 4L14 11Z" fill="#a8e070" stroke="#6ab040" stroke-width=".8"/></svg><svg class="a" style="left:592px;top:118px" width="16" height="16" viewBox="0 0 16 16"><path d="M1 2H15M1 14H15" stroke="#4a78d0" stroke-width="2"/><path d="M1 4V12L15 8Z" fill="#a8e070" stroke="#6ab040" stroke-width=".8"/></svg><svg class="a" style="left:622px;top:118px" width="16" height="16" viewBox="0 0 16 16"><path d="M1 2H15M1 14H15" stroke="#4a78d0" stroke-width="2"/><path d="M15 4V12L1 8Z" fill="#a8e070" stroke="#6ab040" stroke-width=".8"/></svg><svg class="a" style="left:651px;top:118px" width="16" height="16" viewBox="0 0 16 16"><path d="M1 2H15M1 14H15" stroke="#4a78d0" stroke-width="2"/><ellipse cx="8" cy="8" rx="6" ry="3" fill="#a8e070" stroke="#6ab040" stroke-width=".8"/></svg><svg class="a" style="left:680px;top:118px" width="16" height="16" viewBox="0 0 16 16"><path d="M3 6Q3 2 8 2H13M11 0L14 2L11 4" stroke="#3a70c8" stroke-width="1.6" fill="none"/><path d="M13 10Q13 14 8 14H3M5 12L2 14L5 16" stroke="#3a70c8" stroke-width="1.6" fill="none"/><path d="M2 3H6M4 1V5" stroke="#30b030" stroke-width="1.2"/><path d="M10 8H14" stroke="#d03030" stroke-width="1.2"/></svg><svg class="a" style="left:709px;top:118px" width="16" height="16" viewBox="0 0 16 16"><path d="M3 3L13 13M13 3L3 13" stroke="#f0c040" stroke-width="2.2"/><path d="M1 1L5 1L1 5ZM15 1L11 1L15 5ZM1 15L5 15L1 11ZM15 15L11 15L15 11Z" fill="#6aa8f0"/></svg><svg class="a" style="left:739px;top:118px" width="16" height="16" viewBox="0 0 16 16"><path d="M6 2L1 6L6 10V7H10Q13 7 13 10Q13 13 10 13H5" stroke="#4a80d8" stroke-width="1.6" fill="#c8dcff"/><path d="M6 13H11Q14 13 14 10" stroke="#f0c040" stroke-width="1.6" fill="none"/></svg><svg class="a" style="left:768px;top:118px" width="16" height="16" viewBox="0 0 16 16"><rect x="1" y="2" width="9" height="13" fill="#3a68c0"/><path d="M3 5L5 7L3 9L5 11L3 13M6 4L8 6L6 8L8 10" stroke="#30d050" stroke-width=".8" fill="none"/><path d="M12 3V13M10 11L12 14L14 11" stroke="#4a80d8" stroke-width="1.4" fill="none"/></svg><svg class="a" style="left:797px;top:118px" width="16" height="16" viewBox="0 0 16 16"><rect x="1" y="6" width="11" height="8" fill="#c8dcff" stroke="#4a78d0"/><circle cx="4.5" cy="10" r="1.6" fill="none" stroke="#3a68c0"/><circle cx="8.5" cy="10" r="1.6" fill="none" stroke="#3a68c0"/><path d="M3 4L5 2L7 4L5 6ZM7 4L9 2L11 4L9 6Z" fill="#f0b030"/><path d="M14 4V14" stroke="#4a78d0" stroke-width="1.2"/></svg><svg class="a" style="left:827px;top:118px" width="16" height="16" viewBox="0 0 16 16"><path d="M3 4L5 2L7 4L5 6ZM7 4L9 2L11 4L9 6Z" fill="#f0b030"/><path d="M1 9Q6 6 11 9Q6 15 1 9Z" fill="#f8d890" stroke="#e89030"/><path d="M14 4V14M12 12L14 15L16 12" stroke="#4a78d0" stroke-width="1.2" fill="none"/></svg>

<!-- LEFT PANEL -->
<div class="a" style="left:4px;top:174px;width:210px;height:314px;border:1px solid #a0a0a0;border-top:none;border-radius:0 0 8px 8px;background:#e6e6e6"></div><div class="a" style="left:4px;top:147px;width:106px;height:28px;border-radius:9px 9px 0 0;background:linear-gradient(#c2d6f2 0,#c6d9f2 5px,#a6c2ea 7px,#6a9cda 8px,#6a9cda 100%);border:1px solid #2c54a8;border-bottom:none"></div><div class="a" style="left:5px;top:155px;width:5px;height:19px;background:#4a7ed2"></div><div class="a" style="left:104px;top:155px;width:5px;height:19px;background:#4a7ed2"></div><div class="a" style="left:110px;top:149px;width:100px;height:26px;border-radius:9px 9px 0 0;background:linear-gradient(#fff 0,#fff 4px,#e2e2e2 8px,#e0e0e0 100%);border:1px solid #999;border-bottom:none"></div><div class="a" style="left:115px;top:157px;width:5px;height:17px;background:#ececec"></div><div class="a" style="left:198px;top:157px;width:8px;height:17px;background:#ececec"></div><div class="t" style="left:3px;top:156px;width:106px;text-align:center">Favorites</div><div class="t" style="left:110px;top:158px;width:96px;text-align:center">Quick Edit</div><div class="a" style="left:4px;top:174px;width:210px;height:3px;background:linear-gradient(#8ab8f0 0,#3a8cf0 1px,#3a8cf0 2px,#bcd6f4 3px)"></div><div class="a" style="left:8px;top:177px;width:202px;height:275px;background:#fff;border-left:1px solid #d8d8d8"></div><div class="t fav" style="top:182px">Half Volume (Ctrl+H)</div><div class="t fav" style="top:202px">Double Volume (Ctrl+D)</div><div class="t fav" style="top:222px">Fade In</div><div class="t fav" style="top:242px">Fade Out</div><div class="t fav" style="top:262px">Normalize Audio Level</div><div class="t fav" style="top:282px">Double Speed (Ctrl+1)</div><div class="t fav" style="top:302px">Slow Down Speed (Ctrl+2)</div><div class="t fav" style="top:322px">Many Echoes (Ctrl+3)</div><div class="t fav" style="top:342px">Very Large Cavern Effect (Ctrl+4)</div><div class="t fav" style="top:362px">Allien Saying Effect (Ctrl+5)</div><div class="t fav" style="top:382px">Radio (Ctrl+6)</div><div class="t fav" style="top:402px">Cassette Noise Reduce (Ctrl+7)</div><div class="a" style="left:9px;top:457px;width:200px;height:24px;border:1px solid #6a6a6a;border-radius:12px;background:linear-gradient(#f6f6f6,#e4e4e4 60%,#d8d8d8)"></div><div class="t" style="left:9px;top:464px;width:200px;text-align:center">Edit Favorites...</div>

<!-- WAVEFORM -->
<div id="wf" class="a"></div>
<svg class="a" style="left:0;top:0" width="990" height="530" viewBox="0 0 990 530" shape-rendering="crispEdges"><rect x="216" y="148" width="719" height="8" fill="#000"/><rect x="216" y="149" width="399" height="6" fill="#00006b"/><rect x="769" y="149" width="166" height="6" fill="#00006b"/><rect x="256" y="149" width="1" height="6" fill="#e09060"/><rect x="426" y="149" width="1" height="6" fill="#e09060"/><rect x="257" y="162" width="171" height="273" fill="#da8b56"/><path d="M257 157H263L257 163Z" fill="#da8b56" shape-rendering="auto"/><path d="M428 157H422L428 163Z" fill="#da8b56" shape-rendering="auto"/><path d="M257 440H263L257 434Z" fill="#da8b56" shape-rendering="auto"/><path d="M428 440H422L428 434Z" fill="#da8b56" shape-rendering="auto"/><rect x="615" y="162" width="154" height="273" fill="#000"/><path d="M615 157H621L615 163Z" fill="#000" shape-rendering="auto"/><path d="M769 157H763L769 163Z" fill="#000" shape-rendering="auto"/><path d="M615 440H621L615 434Z" fill="#000" shape-rendering="auto"/><path d="M769 440H763L769 434Z" fill="#000" shape-rendering="auto"/><rect x="216" y="169" width="399" height="1" fill="#000"/><rect x="769" y="169" width="166" height="1" fill="#000"/><rect x="216" y="289" width="399" height="1" fill="#000"/><rect x="769" y="289" width="166" height="1" fill="#000"/><rect x="216" y="307" width="399" height="1" fill="#000"/><rect x="769" y="307" width="166" height="1" fill="#000"/><rect x="216" y="429" width="399" height="1" fill="#000"/><rect x="769" y="429" width="166" height="1" fill="#000"/><rect x="216" y="297" width="754" height="1" fill="#8c8c8c"/><rect x="216" y="298" width="754" height="1" fill="#fff"/><rect x="216" y="299" width="754" height="1" fill="#8c8c8c"/><rect x="216" y="228" width="3" height="1" fill="#00006e"/><rect x="917" y="228" width="18" height="1" fill="#00006e"/><rect x="216" y="367" width="3" height="1" fill="#00006e"/><rect x="917" y="367" width="18" height="1" fill="#00006e"/><path d="M218.5 221V235M219.5 215V242M220.5 218V239M221.5 222V239M222.5 215V247M223.5 207V250M224.5 218V236M225.5 220V237M226.5 224V239M227.5 222V235M228.5 218V237M229.5 210V239M230.5 215V236M231.5 218V235M232.5 218V234M233.5 220V233M234.5 217V237M235.5 222V234M236.5 224V233M237.5 224V232M238.5 224V236M239.5 224V233M240.5 223V236M241.5 217V240M242.5 222V232M243.5 223V234M244.5 224V234M245.5 223V234M246.5 222V233M247.5 211V241M248.5 219V237M249.5 223V233M250.5 218V239M251.5 216V241M252.5 202V254M253.5 215V241M254.5 198V257M255.5 212V244M256.5 215V241M257.5 215V242M258.5 220V236M259.5 213V239M260.5 221V234M261.5 221V236M262.5 220V236M263.5 219V238M264.5 222V233M265.5 223V233M266.5 223V236M267.5 217V239M268.5 222V233M269.5 224V233M270.5 215V239M271.5 220V234M272.5 223V233M273.5 222V235M274.5 224V234M275.5 225V232M276.5 224V238M277.5 211V246M278.5 222V235M279.5 219V237M280.5 220V237M281.5 204V251M282.5 212V247M283.5 198V258M284.5 217V239M285.5 198V249M286.5 218V236M287.5 211V240M288.5 216V245M289.5 216V236M290.5 219V238M291.5 205V245M292.5 220V236M293.5 218V236M294.5 220V234M295.5 214V239M296.5 224V234M297.5 223V234M298.5 222V233M299.5 224V233M300.5 224V233M301.5 214V243M302.5 221V238M303.5 225V232M304.5 221V233M305.5 222V237M306.5 222V235M307.5 222V238M308.5 208V249M309.5 219V244M310.5 222V237M311.5 200V259M312.5 209V249M313.5 216V242M314.5 215V242M315.5 198V259M316.5 210V247M317.5 214V246M318.5 206V247M319.5 218V237M320.5 206V247M321.5 214V238M322.5 217V236M323.5 218V238M324.5 220V238M325.5 224V236M326.5 224V234M327.5 223V232M328.5 224V233M329.5 223V236M330.5 224V234M331.5 225V232M332.5 218V241M333.5 224V233M334.5 221V237M335.5 222V235M336.5 212V234M337.5 222V234M338.5 204V249M339.5 209V244M340.5 218V239M341.5 208V247M342.5 222V245M343.5 217V245M344.5 218V239M345.5 194V262M346.5 201V255M347.5 220V237M348.5 218V248M349.5 219V239M350.5 195V272M351.5 204V253M352.5 203V257M353.5 217V241M354.5 213V250M355.5 218V240M356.5 208V241M357.5 182V257M358.5 212V239M359.5 207V248M360.5 191V262M361.5 209V246M362.5 217V249M363.5 205V249M364.5 211V249M365.5 214V244M366.5 215V245M367.5 201V251M368.5 214V241M369.5 221V236M370.5 214V240M371.5 213V244M372.5 213V238M373.5 216V238M374.5 217V240M375.5 193V264M376.5 211V246M377.5 220V237M378.5 216V248M379.5 210V244M380.5 218V237M381.5 222V235M382.5 218V235M383.5 223V235M384.5 224V232M385.5 219V237M386.5 223V235M387.5 211V243M388.5 217V235M389.5 206V247M390.5 223V233M391.5 224V238M392.5 222V238M393.5 219V236M394.5 220V233M395.5 224V233M396.5 224V233M397.5 225V239M398.5 220V232M399.5 222V235M400.5 209V243M401.5 198V253M402.5 210V243M403.5 211V242M404.5 203V253M405.5 215V240M406.5 223V235M407.5 221V236M408.5 211V246M409.5 215V243M410.5 223V241M411.5 218V239M412.5 222V236M413.5 221V236M414.5 222V235M415.5 225V234M416.5 220V234M417.5 223V234M418.5 220V234M419.5 219V238M420.5 211V247M421.5 218V239M422.5 223V234M423.5 222V236M424.5 223V234M425.5 213V243M426.5 217V240M427.5 204V247M428.5 212V241M429.5 223V244M430.5 218V247M431.5 222V235M432.5 197V261M433.5 206V252M434.5 212V250M435.5 206V257M436.5 220V240M437.5 219V241M438.5 220V244M439.5 207V250M440.5 214V243M441.5 215V242M442.5 220V235M443.5 221V235M444.5 223V237M445.5 222V233M446.5 223V233M447.5 222V233M448.5 220V234M449.5 214V241M450.5 220V234M451.5 215V241M452.5 220V236M453.5 223V234M454.5 226V232M455.5 224V235M456.5 224V238M457.5 217V243M458.5 219V236M459.5 214V239M460.5 214V239M461.5 219V239M462.5 198V263M463.5 221V237M464.5 218V240M465.5 202V254M466.5 212V245M467.5 217V239M468.5 218V240M469.5 219V238M470.5 213V242M471.5 197V256M472.5 220V238M473.5 210V234M474.5 220V236M475.5 223V234M476.5 224V233M477.5 223V234M478.5 221V236M479.5 222V237M480.5 220V236M481.5 210V246M482.5 224V233M483.5 224V239M484.5 222V233M485.5 223V233M486.5 221V235M487.5 223V235M488.5 218V236M489.5 215V237M490.5 223V233M491.5 222V234M492.5 215V246M493.5 201V253M494.5 218V240M495.5 201V259M496.5 207V252M497.5 206V251M498.5 215V242M499.5 217V241M500.5 223V238M501.5 210V244M502.5 218V235M503.5 224V234M504.5 224V233M505.5 222V235M506.5 224V232M507.5 224V234M508.5 219V237M509.5 224V233M510.5 225V234M511.5 225V234M512.5 222V231M513.5 218V237M514.5 222V234M515.5 223V232M516.5 225V233M517.5 225V236M518.5 225V232M519.5 225V231M520.5 223V232M521.5 216V235M522.5 215V244M523.5 207V251M524.5 215V242M525.5 210V257M526.5 220V234M527.5 212V247M528.5 186V262M529.5 201V250M530.5 215V241M531.5 203V236M532.5 208V256M533.5 191V268M534.5 219V245M535.5 203V254M536.5 213V246M537.5 211V246M538.5 201V239M539.5 192V264M540.5 218V254M541.5 219V238M542.5 195V259M543.5 203V267M544.5 208V249M545.5 215V247M546.5 210V247M547.5 220V239M548.5 218V238M549.5 220V238M550.5 191V266M551.5 209V256M552.5 213V242M553.5 210V247M554.5 217V246M555.5 217V239M556.5 204V248M557.5 188V272M558.5 209V255M559.5 218V239M560.5 216V254M561.5 214V238M562.5 218V239M563.5 220V235M564.5 213V243M565.5 221V240M566.5 217V239M567.5 220V238M568.5 206V251M569.5 212V241M570.5 214V235M571.5 220V235M572.5 210V247M573.5 220V241M574.5 216V241M575.5 218V240M576.5 201V247M577.5 212V240M578.5 212V236M579.5 219V238M580.5 222V234M581.5 221V235M582.5 220V236M583.5 208V249M584.5 214V243M585.5 213V245M586.5 218V239M587.5 206V247M588.5 210V243M589.5 190V266M590.5 202V239M591.5 208V249M592.5 203V259M593.5 215V244M594.5 214V243M595.5 203V255M596.5 210V245M597.5 211V247M598.5 220V237M599.5 203V249M600.5 214V240M601.5 212V238M602.5 216V246M603.5 195V262M604.5 185V259M605.5 216V241M606.5 217V240M607.5 201V256M608.5 216V249M609.5 206V251M610.5 217V245M611.5 216V244M612.5 217V244M613.5 208V254M614.5 218V240M769.5 225V231M770.5 224V232M771.5 224V233M772.5 221V237M773.5 216V243M774.5 221V236M775.5 223V233M776.5 223V236M777.5 218V243M778.5 224V234M779.5 226V234M780.5 220V234M781.5 219V239M782.5 211V247M783.5 223V236M784.5 222V235M785.5 219V234M786.5 224V233M787.5 217V235M788.5 206V242M789.5 220V234M790.5 221V235M791.5 225V237M792.5 218V234M793.5 222V238M794.5 222V236M795.5 223V234M796.5 224V233M797.5 208V247M798.5 213V235M799.5 224V243M800.5 210V251M801.5 224V240M802.5 223V233M803.5 215V236M804.5 211V244M805.5 224V233M806.5 222V235M807.5 214V241M808.5 217V236M809.5 213V234M810.5 203V249M811.5 212V233M812.5 220V236M813.5 218V239M814.5 202V249M815.5 209V242M816.5 223V234M817.5 202V253M818.5 219V238M819.5 222V237M820.5 224V237M821.5 220V237M822.5 221V235M823.5 223V238M824.5 215V241M825.5 220V236M826.5 219V233M827.5 221V233M828.5 224V233M829.5 218V239M830.5 225V233M831.5 225V232M832.5 224V231M833.5 218V239M834.5 222V234M835.5 224V232M836.5 222V233M837.5 225V233M838.5 224V234M839.5 222V233M840.5 223V234M841.5 225V234M842.5 220V234M843.5 224V234M844.5 224V234M845.5 215V238M846.5 223V236M847.5 224V235M848.5 223V233M849.5 214V239M850.5 221V235M851.5 215V239M852.5 222V234M853.5 224V232M854.5 222V232M855.5 223V239M856.5 221V237M857.5 214V246M858.5 220V239M859.5 220V239M860.5 218V236M861.5 212V241M862.5 221V234M863.5 221V236M864.5 217V234M865.5 221V236M866.5 206V251M867.5 218V240M868.5 220V238M869.5 214V238M870.5 202V255M871.5 221V234M872.5 211V239M873.5 208V246M874.5 222V238M875.5 210V243M876.5 222V238M877.5 223V233M878.5 224V236M879.5 225V232M880.5 220V237M881.5 223V234M882.5 224V232M883.5 225V232M884.5 224V233M885.5 225V233M886.5 221V237M887.5 224V235M888.5 226V232M889.5 226V231M890.5 226V232M891.5 221V234M892.5 224V232M893.5 225V232M894.5 226V232M895.5 225V232M896.5 225V231M897.5 226V230M898.5 226V231M899.5 227V231M900.5 222V232M901.5 226V231M902.5 226V231M903.5 226V231M904.5 224V232M905.5 226V231M906.5 227V231M907.5 226V231M908.5 226V230M909.5 226V231M910.5 226V231M911.5 227V230M912.5 227V231M913.5 226V230M914.5 226V230M915.5 224V230M916.5 227V230" stroke="#0a0a6e" stroke-width="1" fill="none"/><path d="M615.5 214V243M616.5 217V241M617.5 210V257M618.5 217V244M619.5 211V247M620.5 213V239M621.5 191V251M622.5 208V241M623.5 213V243M624.5 206V247M625.5 212V242M626.5 207V245M627.5 203V251M628.5 209V246M629.5 207V240M630.5 216V241M631.5 201V254M632.5 182V267M633.5 216V244M634.5 212V248M635.5 195V254M636.5 212V245M637.5 216V245M638.5 206V249M639.5 214V248M640.5 203V256M641.5 212V251M642.5 200V251M643.5 217V238M644.5 208V248M645.5 216V240M646.5 210V241M647.5 190V264M648.5 206V249M649.5 210V244M650.5 193V254M651.5 203V259M652.5 209V252M653.5 210V244M654.5 216V244M655.5 206V254M656.5 216V242M657.5 210V249M658.5 215V243M659.5 209V255M660.5 212V247M661.5 184V259M662.5 202V274M663.5 214V253M664.5 208V251M665.5 203V262M666.5 208V254M667.5 210V253M668.5 193V264M669.5 209V246M670.5 210V244M671.5 192V259M672.5 219V238M673.5 204V248M674.5 206V251M675.5 221V236M676.5 212V243M677.5 202V243M678.5 210V249M679.5 190V271M680.5 217V242M681.5 206V248M682.5 206V241M683.5 210V243M684.5 214V243M685.5 203V249M686.5 211V250M687.5 219V237M688.5 203V259M689.5 216V241M690.5 216V244M691.5 210V243M692.5 195V254M693.5 207V245M694.5 214V241M695.5 210V245M696.5 221V235M697.5 215V238M698.5 215V242M699.5 216V241M700.5 213V247M701.5 217V242M702.5 217V239M703.5 220V242M704.5 213V247M705.5 221V237M706.5 221V236M707.5 204V251M708.5 220V245M709.5 207V247M710.5 212V239M711.5 216V238M712.5 216V237M713.5 219V237M714.5 210V246M715.5 215V241M716.5 219V237M717.5 214V235M718.5 221V236M719.5 206V251M720.5 216V243M721.5 208V249M722.5 214V243M723.5 219V236M724.5 221V241M725.5 203V249M726.5 220V236M727.5 219V236M728.5 221V237M729.5 211V249M730.5 219V244M731.5 218V239M732.5 219V236M733.5 220V243M734.5 223V236M735.5 221V242M736.5 219V245M737.5 207V255M738.5 215V245M739.5 222V237M740.5 219V237M741.5 212V243M742.5 223V239M743.5 220V237M744.5 221V234M745.5 221V236M746.5 218V238M747.5 205V251M748.5 218V239M749.5 217V240M750.5 222V234M751.5 210V245M752.5 215V241M753.5 220V237M754.5 220V239M755.5 212V243M756.5 217V238M757.5 218V237M758.5 221V235M759.5 222V235M760.5 223V233M761.5 224V234M762.5 221V235M763.5 223V233M764.5 220V233M765.5 221V236M766.5 216V241M767.5 223V236M768.5 222V233" stroke="#1414e0" stroke-width="1" fill="none"/><path d="M218.5 363V374M219.5 353V382M220.5 358V376M221.5 360V375M222.5 353V387M223.5 345V390M224.5 359V376M225.5 358V380M226.5 362V379M227.5 361V374M228.5 356V378M229.5 348V379M230.5 359V372M231.5 361V373M232.5 362V371M233.5 358V373M234.5 355V377M235.5 359V374M236.5 362V371M237.5 361V372M238.5 363V372M239.5 362V372M240.5 361V374M241.5 355V380M242.5 361V373M243.5 362V372M244.5 361V373M245.5 363V373M246.5 359V373M247.5 349V381M248.5 356V376M249.5 356V376M250.5 356V379M251.5 359V375M252.5 339V395M253.5 353V381M254.5 335V398M255.5 346V388M256.5 355V381M257.5 360V374M258.5 352V377M259.5 351V379M260.5 363V371M261.5 358V374M262.5 359V372M263.5 357V378M264.5 362V372M265.5 361V375M266.5 363V374M267.5 355V379M268.5 363V371M269.5 362V375M270.5 353V379M271.5 361V375M272.5 363V372M273.5 362V371M274.5 361V373M275.5 357V374M276.5 359V376M277.5 349V386M278.5 353V380M279.5 359V376M280.5 358V384M281.5 341V392M282.5 356V378M283.5 335V399M284.5 350V385M285.5 335V389M286.5 352V382M287.5 356V375M288.5 354V385M289.5 357V381M290.5 359V377M291.5 342V385M292.5 348V381M293.5 352V375M294.5 359V374M295.5 352V379M296.5 357V375M297.5 361V372M298.5 359V376M299.5 361V378M300.5 358V371M301.5 352V383M302.5 363V371M303.5 359V376M304.5 357V375M305.5 354V373M306.5 359V378M307.5 362V375M308.5 346V389M309.5 355V384M310.5 355V386M311.5 337V400M312.5 352V384M313.5 353V383M314.5 349V387M315.5 335V400M316.5 353V392M317.5 359V382M318.5 343V387M319.5 357V378M320.5 343V387M321.5 349V375M322.5 359V375M323.5 356V378M324.5 363V377M325.5 359V374M326.5 361V373M327.5 360V375M328.5 364V371M329.5 362V373M330.5 362V376M331.5 361V375M332.5 356V381M333.5 364V376M334.5 364V375M335.5 363V378M336.5 358V372M337.5 361V376M338.5 341V389M339.5 359V374M340.5 357V377M341.5 346V387M342.5 356V377M343.5 360V376M344.5 358V382M345.5 331V403M346.5 348V380M347.5 355V380M348.5 359V378M349.5 350V393M350.5 332V414M351.5 350V390M352.5 340V398M353.5 348V385M354.5 357V376M355.5 356V378M356.5 353V385M357.5 318V398M358.5 347V380M359.5 351V382M360.5 327V403M361.5 357V387M362.5 346V386M363.5 344V383M364.5 349V389M365.5 349V381M366.5 357V380M367.5 338V392M368.5 355V378M369.5 347V381M370.5 356V381M371.5 351V384M372.5 360V388M373.5 358V377M374.5 350V385M375.5 330V405M376.5 356V379M377.5 359V379M378.5 358V377M379.5 348V387M380.5 354V381M381.5 358V379M382.5 361V374M383.5 362V371M384.5 359V376M385.5 355V375M386.5 362V374M387.5 349V383M388.5 355V378M389.5 343V387M390.5 356V377M391.5 353V373M392.5 360V374M393.5 362V372M394.5 363V371M395.5 363V373M396.5 361V372M397.5 362V377M398.5 362V373M399.5 357V374M400.5 362V387M401.5 335V394M402.5 351V381M403.5 359V377M404.5 340V394M405.5 362V375M406.5 361V373M407.5 351V377M408.5 349V386M409.5 352V376M410.5 360V381M411.5 362V375M412.5 363V375M413.5 361V373M414.5 362V374M415.5 361V372M416.5 362V373M417.5 364V372M418.5 357V372M419.5 363V372M420.5 349V387M421.5 359V376M422.5 362V372M423.5 363V372M424.5 357V376M425.5 351V383M426.5 358V374M427.5 341V387M428.5 361V375M429.5 360V373M430.5 356V379M431.5 359V375M432.5 334V402M433.5 356V380M434.5 350V386M435.5 343V398M436.5 353V386M437.5 359V378M438.5 357V377M439.5 345V390M440.5 351V384M441.5 359V378M442.5 354V381M443.5 363V372M444.5 363V372M445.5 361V374M446.5 362V374M447.5 362V372M448.5 361V373M449.5 352V381M450.5 361V373M451.5 353V381M452.5 363V377M453.5 363V372M454.5 362V372M455.5 361V373M456.5 363V378M457.5 355V379M458.5 359V375M459.5 352V379M460.5 346V380M461.5 357V375M462.5 335V404M463.5 351V383M464.5 353V384M465.5 339V395M466.5 349V385M467.5 355V386M468.5 354V383M469.5 355V383M470.5 354V379M471.5 334V397M472.5 358V377M473.5 357V373M474.5 355V378M475.5 358V383M476.5 359V375M477.5 362V374M478.5 363V371M479.5 361V373M480.5 357V378M481.5 348V386M482.5 352V376M483.5 356V379M484.5 360V379M485.5 363V372M486.5 359V375M487.5 364V370M488.5 361V373M489.5 353V377M490.5 360V381M491.5 362V373M492.5 349V375M493.5 338V394M494.5 356V377M495.5 338V400M496.5 344V393M497.5 343V392M498.5 351V384M499.5 351V386M500.5 354V382M501.5 348V384M502.5 354V379M503.5 357V375M504.5 360V374M505.5 361V373M506.5 360V373M507.5 359V374M508.5 357V377M509.5 364V371M510.5 362V372M511.5 360V371M512.5 363V373M513.5 356V377M514.5 359V374M515.5 362V371M516.5 362V372M517.5 363V371M518.5 364V370M519.5 357V373M520.5 358V373M521.5 353V381M522.5 358V375M523.5 345V392M524.5 358V375M525.5 348V398M526.5 352V391M527.5 345V388M528.5 322V403M529.5 343V389M530.5 348V393M531.5 343V387M532.5 346V395M533.5 327V410M534.5 339V397M535.5 340V395M536.5 351V382M537.5 347V389M538.5 341V379M539.5 328V405M540.5 346V389M541.5 339V380M542.5 332V400M543.5 340V409M544.5 345V393M545.5 353V379M546.5 348V387M547.5 350V384M548.5 345V381M549.5 350V386M550.5 327V408M551.5 351V398M552.5 343V392M553.5 348V381M554.5 345V385M555.5 337V382M556.5 337V382M557.5 324V414M558.5 350V387M559.5 339V378M560.5 357V377M561.5 346V382M562.5 361V374M563.5 361V376M564.5 351V381M565.5 360V376M566.5 361V382M567.5 361V379M568.5 343V392M569.5 359V376M570.5 350V377M571.5 353V378M572.5 348V387M573.5 360V381M574.5 352V375M575.5 352V378M576.5 338V387M577.5 350V374M578.5 346V382M579.5 353V377M580.5 357V380M581.5 353V376M582.5 356V375M583.5 346V389M584.5 357V380M585.5 349V379M586.5 358V388M587.5 343V396M588.5 352V383M589.5 326V408M590.5 338V390M591.5 348V385M592.5 340V400M593.5 347V392M594.5 350V388M595.5 340V396M596.5 352V384M597.5 358V379M598.5 349V375M599.5 340V389M600.5 346V385M601.5 351V392M602.5 354V379M603.5 332V403M604.5 321V400M605.5 348V381M606.5 345V388M607.5 338V397M608.5 357V376M609.5 343V392M610.5 353V382M611.5 353V378M612.5 355V383M613.5 346V395M614.5 356V375M769.5 363V372M770.5 361V371M771.5 364V372M772.5 360V376M773.5 354V383M774.5 357V375M775.5 359V373M776.5 361V376M777.5 356V383M778.5 359V376M779.5 362V372M780.5 362V374M781.5 358V374M782.5 349V387M783.5 363V380M784.5 358V378M785.5 362V373M786.5 361V373M787.5 357V373M788.5 343V382M789.5 354V374M790.5 360V375M791.5 360V374M792.5 358V377M793.5 359V371M794.5 362V373M795.5 359V372M796.5 355V378M797.5 346V387M798.5 358V382M799.5 355V376M800.5 348V392M801.5 361V374M802.5 361V384M803.5 354V380M804.5 349V384M805.5 360V374M806.5 363V372M807.5 352V381M808.5 356V378M809.5 352V381M810.5 340V389M811.5 348V378M812.5 362V379M813.5 354V384M814.5 339V389M815.5 359V374M816.5 360V373M817.5 339V394M818.5 350V383M819.5 351V382M820.5 359V371M821.5 363V381M822.5 361V373M823.5 361V374M824.5 353V381M825.5 360V372M826.5 364V372M827.5 361V374M828.5 360V373M829.5 356V379M830.5 362V373M831.5 361V371M832.5 364V375M833.5 356V379M834.5 362V372M835.5 363V374M836.5 362V373M837.5 364V371M838.5 361V372M839.5 362V373M840.5 360V374M841.5 362V372M842.5 365V370M843.5 362V373M844.5 361V373M845.5 353V378M846.5 359V374M847.5 358V373M848.5 360V377M849.5 352V379M850.5 360V373M851.5 353V379M852.5 360V375M853.5 365V375M854.5 359V371M855.5 356V376M856.5 362V377M857.5 352V386M858.5 361V373M859.5 359V376M860.5 363V377M861.5 350V381M862.5 361V379M863.5 358V373M864.5 362V381M865.5 360V375M866.5 343V392M867.5 355V380M868.5 349V381M869.5 359V388M870.5 339V396M871.5 355V384M872.5 359V386M873.5 346V386M874.5 355V378M875.5 348V383M876.5 352V375M877.5 362V372M878.5 362V372M879.5 363V372M880.5 358V377M881.5 364V374M882.5 362V374M883.5 364V372M884.5 365V373M885.5 365V369M886.5 360V377M887.5 363V373M888.5 364V372M889.5 364V373M890.5 363V370M891.5 360V373M892.5 363V371M893.5 362V371M894.5 365V369M895.5 364V371M896.5 365V371M897.5 365V370M898.5 363V369M899.5 365V371M900.5 361V371M901.5 365V370M902.5 363V369M903.5 365V370M904.5 363V371M905.5 365V370M906.5 365V370M907.5 365V370M908.5 366V370M909.5 366V370M910.5 366V370M911.5 366V370M912.5 365V370M913.5 365V370M914.5 365V369M915.5 363V370M916.5 365V369" stroke="#0a0a6e" stroke-width="1" fill="none"/><path d="M615.5 353V385M616.5 356V382M617.5 348V398M618.5 355V381M619.5 355V382M620.5 347V386M621.5 327V392M622.5 344V385M623.5 342V379M624.5 343V387M625.5 351V386M626.5 352V383M627.5 340V392M628.5 351V384M629.5 357V382M630.5 354V379M631.5 337V395M632.5 318V409M633.5 333V390M634.5 353V382M635.5 332V395M636.5 353V381M637.5 344V388M638.5 343V389M639.5 353V383M640.5 340V397M641.5 352V388M642.5 337V392M643.5 356V381M644.5 355V381M645.5 354V379M646.5 349V388M647.5 326V405M648.5 352V378M649.5 348V385M650.5 330V395M651.5 340V400M652.5 346V383M653.5 349V389M654.5 351V381M655.5 343V395M656.5 350V389M657.5 348V389M658.5 348V382M659.5 349V383M660.5 347V392M661.5 320V400M662.5 339V416M663.5 358V380M664.5 342V385M665.5 340V403M666.5 345V397M667.5 350V381M668.5 330V405M669.5 353V381M670.5 351V384M671.5 328V400M672.5 350V383M673.5 348V384M674.5 343V392M675.5 357V388M676.5 356V393M677.5 352V379M678.5 339V382M679.5 326V413M680.5 346V391M681.5 351V397M682.5 355V389M683.5 350V382M684.5 357V380M685.5 340V389M686.5 358V378M687.5 346V379M688.5 340V400M689.5 350V388M690.5 358V376M691.5 350V381M692.5 332V395M693.5 346V384M694.5 356V379M695.5 348V385M696.5 359V374M697.5 354V376M698.5 357V378M699.5 354V376M700.5 351V387M701.5 356V379M702.5 357V377M703.5 355V382M704.5 351V387M705.5 357V379M706.5 356V378M707.5 341V392M708.5 355V382M709.5 345V387M710.5 354V379M711.5 352V381M712.5 361V377M713.5 358V374M714.5 348V386M715.5 351V379M716.5 357V378M717.5 358V377M718.5 351V379M719.5 343V392M720.5 350V378M721.5 346V389M722.5 357V378M723.5 353V379M724.5 352V380M725.5 340V389M726.5 349V381M727.5 357V381M728.5 359V378M729.5 349V389M730.5 352V386M731.5 356V381M732.5 360V376M733.5 359V377M734.5 361V384M735.5 362V375M736.5 358V380M737.5 345V396M738.5 362V374M739.5 352V378M740.5 354V378M741.5 350V383M742.5 359V375M743.5 359V377M744.5 361V374M745.5 359V376M746.5 358V377M747.5 342V392M748.5 362V373M749.5 355V379M750.5 358V376M751.5 348V385M752.5 361V375M753.5 359V375M754.5 358V376M755.5 350V383M756.5 362V375M757.5 359V375M758.5 363V373M759.5 362V375M760.5 361V371M761.5 361V371M762.5 363V373M763.5 360V373M764.5 358V375M765.5 359V373M766.5 354V381M767.5 360V375M768.5 363V375" stroke="#1414e0" stroke-width="1" fill="none"/><rect x="216" y="440" width="719" height="1" fill="#8c8c8c"/><rect x="216" y="442" width="1" height="7" fill="#000"/><rect x="224" y="442" width="1" height="3" fill="#000"/><rect x="232" y="442" width="1" height="3" fill="#000"/><rect x="239" y="442" width="1" height="3" fill="#000"/><rect x="247" y="442" width="1" height="3" fill="#000"/><rect x="255" y="442" width="1" height="3" fill="#000"/><rect x="262" y="442" width="1" height="3" fill="#000"/><rect x="270" y="442" width="1" height="3" fill="#000"/><rect x="278" y="442" width="1" height="3" fill="#000"/><rect x="285" y="442" width="1" height="3" fill="#000"/><rect x="293" y="442" width="1" height="6" fill="#000"/><rect x="301" y="442" width="1" height="3" fill="#000"/><rect x="308" y="442" width="1" height="3" fill="#000"/><rect x="316" y="442" width="1" height="3" fill="#000"/><rect x="324" y="442" width="1" height="3" fill="#000"/><rect x="331" y="442" width="1" height="3" fill="#000"/><rect x="339" y="442" width="1" height="3" fill="#000"/><rect x="347" y="442" width="1" height="3" fill="#000"/><rect x="354" y="442" width="1" height="3" fill="#000"/><rect x="362" y="442" width="1" height="3" fill="#000"/><rect x="370" y="442" width="1" height="6" fill="#000"/><rect x="377" y="442" width="1" height="3" fill="#000"/><rect x="385" y="442" width="1" height="3" fill="#000"/><rect x="393" y="442" width="1" height="3" fill="#000"/><rect x="400" y="442" width="1" height="3" fill="#000"/><rect x="408" y="442" width="1" height="3" fill="#000"/><rect x="416" y="442" width="1" height="3" fill="#000"/><rect x="423" y="442" width="1" height="3" fill="#000"/><rect x="431" y="442" width="1" height="3" fill="#000"/><rect x="439" y="442" width="1" height="3" fill="#000"/><rect x="446" y="442" width="1" height="6" fill="#000"/><rect x="454" y="442" width="1" height="3" fill="#000"/><rect x="462" y="442" width="1" height="3" fill="#000"/><rect x="469" y="442" width="1" height="3" fill="#000"/><rect x="477" y="442" width="1" height="3" fill="#000"/><rect x="485" y="442" width="1" height="3" fill="#000"/><rect x="492" y="442" width="1" height="3" fill="#000"/><rect x="500" y="442" width="1" height="3" fill="#000"/><rect x="508" y="442" width="1" height="3" fill="#000"/><rect x="515" y="442" width="1" height="3" fill="#000"/><rect x="523" y="442" width="1" height="6" fill="#000"/><rect x="531" y="442" width="1" height="3" fill="#000"/><rect x="538" y="442" width="1" height="3" fill="#000"/><rect x="546" y="442" width="1" height="3" fill="#000"/><rect x="554" y="442" width="1" height="3" fill="#000"/><rect x="561" y="442" width="1" height="3" fill="#000"/><rect x="569" y="442" width="1" height="3" fill="#000"/><rect x="577" y="442" width="1" height="3" fill="#000"/><rect x="584" y="442" width="1" height="3" fill="#000"/><rect x="592" y="442" width="1" height="3" fill="#000"/><rect x="600" y="442" width="1" height="6" fill="#000"/><rect x="607" y="442" width="1" height="3" fill="#000"/><rect x="615" y="442" width="1" height="3" fill="#000"/><rect x="622" y="442" width="1" height="3" fill="#000"/><rect x="630" y="442" width="1" height="3" fill="#000"/><rect x="638" y="442" width="1" height="3" fill="#000"/><rect x="645" y="442" width="1" height="3" fill="#000"/><rect x="653" y="442" width="1" height="3" fill="#000"/><rect x="661" y="442" width="1" height="3" fill="#000"/><rect x="668" y="442" width="1" height="3" fill="#000"/><rect x="676" y="442" width="1" height="6" fill="#000"/><rect x="684" y="442" width="1" height="3" fill="#000"/><rect x="691" y="442" width="1" height="3" fill="#000"/><rect x="699" y="442" width="1" height="3" fill="#000"/><rect x="707" y="442" width="1" height="3" fill="#000"/><rect x="714" y="442" width="1" height="3" fill="#000"/><rect x="722" y="442" width="1" height="3" fill="#000"/><rect x="730" y="442" width="1" height="3" fill="#000"/><rect x="737" y="442" width="1" height="3" fill="#000"/><rect x="745" y="442" width="1" height="3" fill="#000"/><rect x="753" y="442" width="1" height="6" fill="#000"/><rect x="760" y="442" width="1" height="3" fill="#000"/><rect x="768" y="442" width="1" height="3" fill="#000"/><rect x="776" y="442" width="1" height="3" fill="#000"/><rect x="783" y="442" width="1" height="3" fill="#000"/><rect x="791" y="442" width="1" height="3" fill="#000"/><rect x="799" y="442" width="1" height="3" fill="#000"/><rect x="806" y="442" width="1" height="3" fill="#000"/><rect x="814" y="442" width="1" height="3" fill="#000"/><rect x="822" y="442" width="1" height="3" fill="#000"/><rect x="829" y="442" width="1" height="6" fill="#000"/><rect x="837" y="442" width="1" height="3" fill="#000"/><rect x="845" y="442" width="1" height="3" fill="#000"/><rect x="852" y="442" width="1" height="3" fill="#000"/><rect x="860" y="442" width="1" height="3" fill="#000"/><rect x="868" y="442" width="1" height="3" fill="#000"/><rect x="875" y="442" width="1" height="3" fill="#000"/><rect x="883" y="442" width="1" height="3" fill="#000"/><rect x="891" y="442" width="1" height="3" fill="#000"/><rect x="898" y="442" width="1" height="3" fill="#000"/><rect x="906" y="442" width="1" height="6" fill="#000"/><rect x="914" y="442" width="1" height="3" fill="#000"/><rect x="921" y="442" width="1" height="3" fill="#000"/><rect x="929" y="442" width="1" height="3" fill="#000"/><rect x="935" y="146" width="1" height="152" fill="#8c8c8c"/><rect x="935" y="299" width="1" height="142" fill="#8c8c8c"/><rect x="937" y="148" width="1" height="150" fill="#8c8c8c"/><rect x="937" y="299" width="1" height="143" fill="#8c8c8c"/><rect x="938" y="163" width="6" height="1" fill="#000"/><rect x="938" y="168" width="3" height="1" fill="#000"/><rect x="938" y="172" width="6" height="1" fill="#000"/><rect x="938" y="178" width="3" height="1" fill="#000"/><rect x="938" y="182" width="6" height="1" fill="#000"/><rect x="938" y="187" width="3" height="1" fill="#000"/><rect x="938" y="192" width="6" height="1" fill="#000"/><rect x="938" y="196" width="3" height="1" fill="#000"/><rect x="938" y="201" width="6" height="1" fill="#000"/><rect x="938" y="206" width="3" height="1" fill="#000"/><rect x="938" y="210" width="6" height="1" fill="#000"/><rect x="938" y="216" width="3" height="1" fill="#000"/><rect x="938" y="220" width="6" height="1" fill="#000"/><rect x="938" y="225" width="3" height="1" fill="#000"/><rect x="938" y="230" width="6" height="1" fill="#000"/><rect x="938" y="234" width="3" height="1" fill="#000"/><rect x="938" y="239" width="6" height="1" fill="#000"/><rect x="938" y="244" width="3" height="1" fill="#000"/><rect x="938" y="248" width="6" height="1" fill="#000"/><rect x="938" y="254" width="3" height="1" fill="#000"/><rect x="938" y="258" width="6" height="1" fill="#000"/><rect x="938" y="263" width="3" height="1" fill="#000"/><rect x="938" y="268" width="6" height="1" fill="#000"/><rect x="938" y="272" width="3" height="1" fill="#000"/><rect x="938" y="277" width="6" height="1" fill="#000"/><rect x="938" y="282" width="3" height="1" fill="#000"/><rect x="938" y="286" width="6" height="1" fill="#000"/><rect x="938" y="292" width="3" height="1" fill="#000"/><rect x="938" y="301" width="6" height="1" fill="#000"/><rect x="938" y="306" width="3" height="1" fill="#000"/><rect x="938" y="310" width="6" height="1" fill="#000"/><rect x="938" y="316" width="3" height="1" fill="#000"/><rect x="938" y="320" width="6" height="1" fill="#000"/><rect x="938" y="325" width="3" height="1" fill="#000"/><rect x="938" y="330" width="6" height="1" fill="#000"/><rect x="938" y="334" width="3" height="1" fill="#000"/><rect x="938" y="339" width="6" height="1" fill="#000"/><rect x="938" y="344" width="3" height="1" fill="#000"/><rect x="938" y="348" width="6" height="1" fill="#000"/><rect x="938" y="354" width="3" height="1" fill="#000"/><rect x="938" y="358" width="6" height="1" fill="#000"/><rect x="938" y="363" width="3" height="1" fill="#000"/><rect x="938" y="368" width="6" height="1" fill="#000"/><rect x="938" y="372" width="3" height="1" fill="#000"/><rect x="938" y="377" width="6" height="1" fill="#000"/><rect x="938" y="382" width="3" height="1" fill="#000"/><rect x="938" y="386" width="6" height="1" fill="#000"/><rect x="938" y="392" width="3" height="1" fill="#000"/><rect x="938" y="396" width="6" height="1" fill="#000"/><rect x="938" y="401" width="3" height="1" fill="#000"/><rect x="938" y="406" width="6" height="1" fill="#000"/><rect x="938" y="410" width="3" height="1" fill="#000"/><rect x="938" y="415" width="6" height="1" fill="#000"/><rect x="938" y="420" width="3" height="1" fill="#000"/><rect x="938" y="424" width="6" height="1" fill="#000"/><rect x="938" y="430" width="3" height="1" fill="#000"/><rect x="938" y="434" width="6" height="1" fill="#000"/></svg><div class="t" style="left:949px;top:166px;font-size:9.5px">-1</div><div class="t" style="left:949px;top:176px;font-size:9.5px">-2</div><div class="t" style="left:949px;top:186px;font-size:9.5px">-4</div><div class="t" style="left:949px;top:195px;font-size:9.5px">-7</div><div class="t" style="left:949px;top:204px;font-size:9.5px">-10</div><div class="t" style="left:949px;top:214px;font-size:9.5px">-16</div><div class="t" style="left:949px;top:224px;font-size:9.5px">-90</div><div class="t" style="left:949px;top:233px;font-size:9.5px">-16</div><div class="t" style="left:949px;top:242px;font-size:9.5px">-10</div><div class="t" style="left:949px;top:252px;font-size:9.5px">-7</div><div class="t" style="left:949px;top:262px;font-size:9.5px">-4</div><div class="t" style="left:949px;top:271px;font-size:9.5px">-2</div><div class="t" style="left:949px;top:280px;font-size:9.5px">-1</div><div class="t" style="left:949px;top:304px;font-size:9.5px">-1</div><div class="t" style="left:949px;top:314px;font-size:9.5px">-2</div><div class="t" style="left:949px;top:324px;font-size:9.5px">-4</div><div class="t" style="left:949px;top:333px;font-size:9.5px">-7</div><div class="t" style="left:949px;top:342px;font-size:9.5px">-10</div><div class="t" style="left:949px;top:352px;font-size:9.5px">-16</div><div class="t" style="left:949px;top:362px;font-size:9.5px">-90</div><div class="t" style="left:949px;top:371px;font-size:9.5px">-16</div><div class="t" style="left:949px;top:380px;font-size:9.5px">-10</div><div class="t" style="left:949px;top:390px;font-size:9.5px">-7</div><div class="t" style="left:949px;top:400px;font-size:9.5px">-4</div><div class="t" style="left:949px;top:409px;font-size:9.5px">-2</div><div class="t" style="left:949px;top:418px;font-size:9.5px">-1</div><div class="t" style="left:946px;top:146px;font-size:10px">dB</div><div class="t" style="left:216px;top:448px;font-size:10px">hms</div><div class="t" style="left:268px;top:448px;width:50px;text-align:center;font-size:9.5px">0:10.0</div><div class="t" style="left:345px;top:448px;width:50px;text-align:center;font-size:9.5px">0:20.0</div><div class="t" style="left:421px;top:448px;width:50px;text-align:center;font-size:9.5px">0:30.0</div><div class="t" style="left:498px;top:448px;width:50px;text-align:center;font-size:9.5px">0:40.0</div><div class="t" style="left:574px;top:448px;width:50px;text-align:center;font-size:9.5px">0:50.0</div><div class="t" style="left:651px;top:448px;width:50px;text-align:center;font-size:9.5px">1:00.0</div><div class="t" style="left:728px;top:448px;width:50px;text-align:center;font-size:9.5px">1:10.0</div><div class="t" style="left:804px;top:448px;width:50px;text-align:center;font-size:9.5px">1:20.0</div><div class="t" style="left:881px;top:448px;width:50px;text-align:center;font-size:9.5px">1:30.0</div>

<!-- SCROLL -->
<div class="a" style="left:214px;top:462px;width:662px;height:26px;background:repeating-conic-gradient(#d6d3cc 0 25%,#f6f6f6 0 50%) 0 0/2px 2px"></div><div class="a" style="left:876px;top:462px;width:110px;height:26px;background:#d4d0c8"></div><div class="a" style="left:215px;top:462px;width:15px;height:12px;background:#d4d0c8;border-top:1px solid #fff;border-left:1px solid #fff;border-right:1px solid #404040;border-bottom:1px solid #404040;box-shadow:inset -1px -1px #808080"></div><svg class="a" style="left:220px;top:465px" width="4" height="7"><path d="M4 0V7L0.5 3.5Z" fill="#000"/></svg><div class="a" style="left:215px;top:474px;width:15px;height:13px;background:#d4d0c8;border-top:1px solid #fff;border-left:1px solid #fff;border-right:1px solid #404040;border-bottom:1px solid #404040;box-shadow:inset -1px -1px #808080"></div><svg class="a" style="left:220px;top:477px" width="4" height="7"><path d="M4 0V7L0.5 3.5Z" fill="#000"/></svg><div class="a" style="left:860px;top:462px;width:16px;height:12px;background:#d4d0c8;border-top:1px solid #fff;border-left:1px solid #fff;border-right:1px solid #404040;border-bottom:1px solid #404040;box-shadow:inset -1px -1px #808080"></div><svg class="a" style="left:866px;top:465px" width="4" height="7"><path d="M0 0V7L3.5 3.5Z" fill="#000"/></svg><div class="a" style="left:860px;top:474px;width:16px;height:13px;background:#d4d0c8;border-top:1px solid #fff;border-left:1px solid #fff;border-right:1px solid #404040;border-bottom:1px solid #404040;box-shadow:inset -1px -1px #808080"></div><svg class="a" style="left:866px;top:477px" width="4" height="7"><path d="M0 0V7L3.5 3.5Z" fill="#000"/></svg><div class="a" style="left:571px;top:462px;width:16px;height:13px;background:#d4d0c8;border-top:1px solid #fff;border-left:1px solid #fff;border-right:1px solid #404040;border-bottom:1px solid #404040;box-shadow:inset -1px -1px #808080"></div><div class="a" style="left:701px;top:475px;width:16px;height:13px;background:#d4d0c8;border-top:1px solid #fff;border-left:1px solid #fff;border-right:1px solid #404040;border-bottom:1px solid #404040;box-shadow:inset -1px -1px #808080"></div><svg class="a" style="left:882px;top:466px" width="17" height="17" viewBox="0 0 17 17"><circle cx="6.5" cy="8" r="4.6" fill="#d6eafc" stroke="#2a5ed0" stroke-width="1.4"/><path d="M4.0 6.5q1.5-1 3 .5" stroke="#fff" stroke-width="1" fill="none"/><path d="M10.0 11.5L13.5 15" stroke="#b04010" stroke-width="2.6" stroke-linecap="round"/><path d="M10.0 11.5L13.5 15" stroke="#f0b030" stroke-width="1.4" stroke-linecap="round"/><path d="M13 1V9M9 5H17" stroke="#2a5ed0" stroke-width="2.6"/><path d="M13 2V8M10 5H16" stroke="#fff" stroke-width="1"/></svg><svg class="a" style="left:909px;top:466px" width="17" height="17" viewBox="0 0 17 17"><circle cx="6.5" cy="8" r="4.6" fill="#d6eafc" stroke="#2a5ed0" stroke-width="1.4"/><path d="M4.0 6.5q1.5-1 3 .5" stroke="#fff" stroke-width="1" fill="none"/><path d="M10.0 11.5L13.5 15" stroke="#b04010" stroke-width="2.6" stroke-linecap="round"/><path d="M10.0 11.5L13.5 15" stroke="#f0b030" stroke-width="1.4" stroke-linecap="round"/><path d="M9 5H17" stroke="#2a5ed0" stroke-width="2.6"/><path d="M10 5H16" stroke="#fff" stroke-width="1"/></svg><svg class="a" style="left:936px;top:466px" width="17" height="17" viewBox="0 0 17 17"><rect x="1.5" y="1.5" width="13" height="13" fill="#fff4c0" stroke="#e08a10" stroke-width="1.4"/><rect x="2.5" y="2.5" width="11" height="11" fill="none" stroke="#c04010" stroke-width=".5"/><circle cx="7" cy="7" r="4.6" fill="#d6eafc" stroke="#2a5ed0" stroke-width="1.4"/><path d="M4.5 5.5q1.5-1 3 .5" stroke="#fff" stroke-width="1" fill="none"/><path d="M10.5 10.5L14 14" stroke="#b04010" stroke-width="2.6" stroke-linecap="round"/><path d="M10.5 10.5L14 14" stroke="#f0b030" stroke-width="1.4" stroke-linecap="round"/></svg><svg class="a" style="left:963px;top:466px" width="17" height="17" viewBox="0 0 17 17"><path d="M7.5 2.5H13L15.5 5V15.5H7.5Z" fill="#eef4ff" stroke="#2a5ed0" stroke-width="1.2"/><circle cx="5.5" cy="7.5" r="4.6" fill="#d6eafc" stroke="#2a5ed0" stroke-width="1.4"/><path d="M3.0 6.0q1.5-1 3 .5" stroke="#fff" stroke-width="1" fill="none"/><path d="M9.0 11.0L12.5 14.5" stroke="#b04010" stroke-width="2.6" stroke-linecap="round"/><path d="M9.0 11.0L12.5 14.5" stroke="#f0b030" stroke-width="1.4" stroke-linecap="round"/></svg>

<!-- STATUS -->
<div class="a" style="left:4px;top:507px;width:982px;height:1px;background:#b8b8b8"></div><div class="a" style="left:101px;top:490px;width:1px;height:16px;background:#b8b8b8"></div><div class="a" style="left:202px;top:490px;width:1px;height:36px;background:#b8b8b8"></div><div class="a" style="left:342px;top:490px;width:1px;height:36px;background:#b8b8b8"></div><div class="a" style="left:482px;top:490px;width:1px;height:36px;background:#b8b8b8"></div><div class="t" style="left:4px;top:491px;width:97px;text-align:center">Stereo</div><div class="t" style="left:102px;top:491px;width:100px;text-align:center">0:01:33.576</div><div class="t" style="left:216px;top:491px">View Start: 0:00:00.000</div><div class="t" style="left:358px;top:491px">View End: 0:01:33.576</div><div class="t" style="left:4px;top:510px;width:198px;text-align:center">Original</div><div class="t" style="left:211px;top:510px">Select Start: 0:00:51.929</div><div class="t" style="left:354px;top:510px">Select End: 0:01:11.842</div><div class="t" style="left:488px;top:510px">Original: WMA 44,100 Hz; 16 Bit; Stereo; 64 kbps; Current: Stereo,44,100 Hz</div><svg class="a" style="left:971px;top:511px" width="15" height="15"><path d="M2 13L13 2M6 13L13 6M10 13L13 10" stroke="#9a9a9a" stroke-width="1.5"/></svg>
</body></html>
